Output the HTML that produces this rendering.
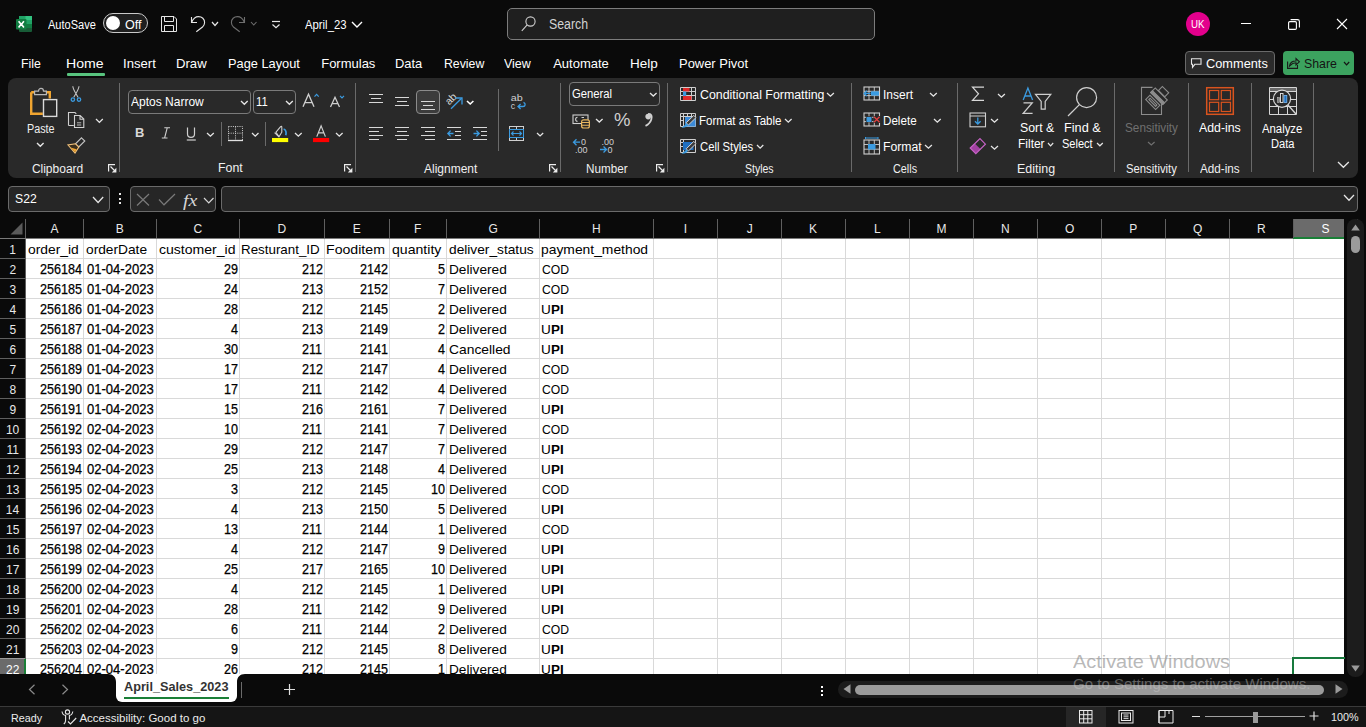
<!DOCTYPE html><html><head><meta charset="utf-8"><style>
html,body{margin:0;padding:0;}
body{width:1366px;height:727px;overflow:hidden;background:#0a0a0a;position:relative;font-family:"Liberation Sans", sans-serif;}
.t{position:absolute;white-space:nowrap;}
.r{position:absolute;box-sizing:border-box;}
.s{position:absolute;overflow:visible;}
</style></head><body>
<svg class="s" style="left:16px;top:16px;" width="17" height="16" viewBox="0 0 17 16">
    <rect x="3" y="0" width="13" height="16" rx="1" fill="#185c37"/>
    <rect x="3" y="0" width="13" height="4" fill="#21a366"/>
    <rect x="9.5" y="0" width="6.5" height="4" fill="#33c481"/>
    <rect x="3" y="4" width="13" height="4" fill="#21a366"/>
    <rect x="3" y="8" width="13" height="4" fill="#107c41"/>
    <rect x="0" y="3" width="10.5" height="10.5" rx="1" fill="#107c41"/>
    <path d="M2.6 5.2 L5 8.3 L2.6 11.4 M7.9 5.2 L5.5 8.3 L7.9 11.4" fill="none" stroke="#fff" stroke-width="1.6"/>
    </svg>
<div class="t" style="left:48.00px;top:19.00px;font-size:12px;line-height:12px;color:#ffffff;transform:scaleX(0.9204);transform-origin:0 0;">AutoSave</div>
<div class="r" style="left:103px;top:13px;width:45px;height:20px;background:#1f1f1f;border:1px solid #c9c9c9;border-radius:10px;"></div>
<div class="r" style="left:106px;top:16px;width:14px;height:14px;background:#ffffff;border-radius:7px;"></div>
<div class="t" style="left:125.18px;top:19.00px;font-size:12px;line-height:12px;color:#ffffff;transform:scaleX(1.0472);transform-origin:0 0;">Off</div>
<svg class="s" style="left:161px;top:16px;" width="16" height="16" viewBox="0 0 16 16"><path d="M0.5 0.5 H13 L15.5 3 V15.5 H0.5 Z" fill="none" stroke="#e6e6e6" stroke-width="1"/>
    <path d="M3.5 0.5 V5.5 H12.5 V0.5 M3.5 15.5 V9.5 H12.5 V15.5" fill="none" stroke="#e6e6e6" stroke-width="1"/></svg>
<svg class="s" style="left:190px;top:16px;" width="16" height="16" viewBox="0 0 16 16"><path d="M1.5 1 V6.5 H7" fill="none" stroke="#e6e6e6" stroke-width="1.1"/>
    <path d="M1.8 6 C3.5 2 6 0.6 8.5 0.6 C12 0.6 14.6 3 14.6 6.5 C14.6 8.5 13.8 9.8 12.5 11 L6.3 15.8" fill="none" stroke="#e6e6e6" stroke-width="1.1"/></svg>
<svg class="s" style="left:210.5px;top:20.5px;" width="8" height="5.5" viewBox="0 0 8 5.5"><path d="M1 1 L4.0 4.5 L7 1" fill="none" stroke="#e6e6e6" stroke-width="1.2"/></svg>
<svg class="s" style="left:230px;top:16px;" width="16" height="16" viewBox="0 0 16 16"><path d="M14.5 1 V6.5 H9" fill="none" stroke="#6e6e6e" stroke-width="1.1"/>
    <path d="M14.2 6 C12.5 2 10 0.6 7.5 0.6 C4 0.6 1.4 3 1.4 6.5 C1.4 8.5 2.2 9.8 3.5 11 L9.7 15.8" fill="none" stroke="#6e6e6e" stroke-width="1.1"/></svg>
<svg class="s" style="left:250px;top:20.5px;" width="7.5" height="5" viewBox="0 0 7.5 5"><path d="M1 1 L3.75 4 L6.5 1" fill="none" stroke="#6e6e6e" stroke-width="1.1"/></svg>
<svg class="s" style="left:271px;top:21px;" width="10" height="8" viewBox="0 0 10 8"><path d="M1 0.5 H9" stroke="#e6e6e6" stroke-width="1.2"/><path d="M1.5 3.5 L5 6.8 L8.5 3.5" fill="none" stroke="#e6e6e6" stroke-width="1.2"/></svg>
<div class="t" style="left:305.00px;top:18.00px;font-size:13px;line-height:13px;color:#ffffff;transform:scaleX(0.8700);transform-origin:0 0;">April_23</div>
<svg class="s" style="left:350.5px;top:21px;" width="12" height="7" viewBox="0 0 12 7"><path d="M1 1 L6.0 6 L11 1" fill="none" stroke="#ffffff" stroke-width="1.4"/></svg>
<div class="r" style="left:507px;top:8px;width:368px;height:32px;background:#1f1f1f;border:1px solid #7c7c7c;border-radius:5px;"></div>
<svg class="s" style="left:521px;top:16px;" width="15" height="16" viewBox="0 0 15 16"><circle cx="9.5" cy="5.5" r="4.6" fill="none" stroke="#cfcfcf" stroke-width="1.1"/><path d="M6.2 8.8 L0.8 14.8" stroke="#cfcfcf" stroke-width="1.1"/></svg>
<div class="t" style="left:549.15px;top:17.00px;font-size:14px;line-height:14px;color:#d2d2d2;transform:scaleX(0.8793);transform-origin:0 0;">Search</div>
<div class="r" style="left:1186px;top:12px;width:24px;height:24px;background:#e3008c;border-radius:12px;"></div>
<div class="t" style="left:1190.76px;top:19.00px;font-size:11.5px;line-height:11.5px;color:#ffffff;transform:scaleX(0.8471);transform-origin:0 0;">UK</div>
<div class="r" style="left:1241px;top:23px;width:10px;height:1px;background:#ffffff;"></div>
<svg class="s" style="left:1288px;top:19px;" width="12" height="11" viewBox="0 0 12 11"><rect x="0.6" y="2.6" width="7.8" height="7.8" rx="1.2" fill="none" stroke="#fff" stroke-width="1.1"/><path d="M2.6 0.6 H9.5 Q11.4 0.6 11.4 2.5 V8.4" fill="none" stroke="#fff" stroke-width="1.1"/></svg>
<svg class="s" style="left:1336px;top:18px;" width="12" height="12" viewBox="0 0 12 12"><path d="M1 1 L11 11 M11 1 L1 11" stroke="#fff" stroke-width="1.1"/></svg>
<div class="t" style="left:21.36px;top:57.00px;font-size:13px;line-height:13px;color:#ffffff;transform:scaleX(0.9445);transform-origin:0 0;">File</div>
<div class="t" style="left:66.42px;top:57.00px;font-size:13px;line-height:13px;color:#ffffff;transform:scaleX(1.0838);transform-origin:0 0;">Home</div>
<div class="t" style="left:123.37px;top:57.00px;font-size:13px;line-height:13px;color:#ffffff;transform:scaleX(1.0080);transform-origin:0 0;">Insert</div>
<div class="t" style="left:176.49px;top:57.00px;font-size:13px;line-height:13px;color:#ffffff;transform:scaleX(1.0111);transform-origin:0 0;">Draw</div>
<div class="t" style="left:228.31px;top:57.00px;font-size:13px;line-height:13px;color:#ffffff;transform:scaleX(0.9850);transform-origin:0 0;">Page Layout</div>
<div class="t" style="left:321.20px;top:57.00px;font-size:13px;line-height:13px;color:#ffffff;">Formulas</div>
<div class="t" style="left:395.31px;top:57.00px;font-size:13px;line-height:13px;color:#ffffff;transform:scaleX(0.9925);transform-origin:0 0;">Data</div>
<div class="t" style="left:443.56px;top:57.00px;font-size:13px;line-height:13px;color:#ffffff;transform:scaleX(0.9441);transform-origin:0 0;">Review</div>
<div class="t" style="left:503.88px;top:57.00px;font-size:13px;line-height:13px;color:#ffffff;transform:scaleX(0.9586);transform-origin:0 0;">View</div>
<div class="t" style="left:553.20px;top:57.00px;font-size:13px;line-height:13px;color:#ffffff;">Automate</div>
<div class="t" style="left:630.26px;top:57.00px;font-size:13px;line-height:13px;color:#ffffff;transform:scaleX(1.0376);transform-origin:0 0;">Help</div>
<div class="t" style="left:679.01px;top:57.00px;font-size:13px;line-height:13px;color:#ffffff;transform:scaleX(0.9949);transform-origin:0 0;">Power Pivot</div>
<div class="r" style="left:67px;top:73px;width:38px;height:2.5px;background:#58c37e;border-radius:1px;"></div>
<div class="r" style="left:1185px;top:51px;width:90px;height:24px;background:#2b2b2b;border:1px solid #6a6a6a;border-radius:4px;"></div>
<svg class="s" style="left:1190px;top:57px;" width="12" height="12" viewBox="0 0 12 12"><path d="M1.5 1.8 H11 V7.3 H4.8 L2.5 10.3 V7.3 H1.5 Z" fill="none" stroke="#e6e6e6" stroke-width="1.1"/></svg>
<div class="t" style="left:1205.99px;top:57.00px;font-size:13px;line-height:13px;color:#ffffff;transform:scaleX(0.9830);transform-origin:0 0;">Comments</div>
<div class="r" style="left:1283px;top:51px;width:71px;height:24px;background:#3ca35f;border-radius:4px;"></div>
<svg class="s" style="left:1287px;top:57px;" width="13" height="12" viewBox="0 0 13 12"><path d="M0.6 4.5 V11.4 H10.5 V8" fill="none" stroke="#1a1a1a" stroke-width="1.1"/><path d="M2.5 9 C3 5.5 6 4 9 4 V1.5 L12.4 4.8 L9 8 V5.8 C6.5 5.8 4.5 7 2.5 9 Z" fill="none" stroke="#1a1a1a" stroke-width="1.1"/></svg>
<div class="t" style="left:1304.01px;top:57.00px;font-size:13px;line-height:13px;color:#141414;transform:scaleX(0.9493);transform-origin:0 0;">Share</div>
<svg class="s" style="left:1343.2px;top:61px;" width="7.2" height="4.9" viewBox="0 0 7.2 4.9"><path d="M1 1 L3.6 3.9 L6.2 1" fill="none" stroke="#141414" stroke-width="1.2"/></svg>
<div class="r" style="left:8px;top:78px;width:1350px;height:99.5px;background:#292929;border-radius:8px;"></div>
<svg class="s" style="left:29px;top:86px;" width="30" height="32" viewBox="0 0 30 32">
<path d="M2.2 6.2 H6 M15 6.2 H20.8 V12.5 M2.2 6.2 V27.8 H13.8" fill="none" stroke="#f0a531" stroke-width="2.4"/>
<path d="M5.6 8.6 V5.2 H9.5 C9.5 1.5 14.5 1.5 14.5 5.2 H17.4 V8.6 Z" fill="#292929" stroke="#b8b8b8" stroke-width="1.2"/>
<rect x="14.5" y="13.6" width="13.2" height="16.8" fill="#292929" stroke="#dadada" stroke-width="1.4"/>
</svg>
<div class="t" style="left:27.00px;top:123.00px;font-size:12px;line-height:12px;color:#f0f0f0;transform:scaleX(0.8996);transform-origin:0 0;">Paste</div>
<svg class="s" style="left:36.2px;top:142px;" width="8.6" height="5.2" viewBox="0 0 8.6 5.2"><path d="M1 1 L4.3 4.2 L7.6 1" fill="none" stroke="#e6e6e6" stroke-width="1.4"/></svg>
<svg class="s" style="left:70px;top:85px;" width="13" height="18" viewBox="0 0 13 18">
<path d="M2.8 1.3 C3.2 5 6 8.5 8 12.2 M9 1.3 C8.6 5 5.8 8.5 3.8 12.2" fill="none" stroke="#c4c4c4" stroke-width="1.1"/>
<circle cx="2.9" cy="14.6" r="1.7" fill="none" stroke="#3b9be0" stroke-width="1.3"/>
<circle cx="9" cy="14.6" r="1.7" fill="none" stroke="#3b9be0" stroke-width="1.3"/>
</svg>
<svg class="s" style="left:67px;top:111px;" width="18" height="18" viewBox="0 0 18 18">
<path d="M1.5 14.5 V1.5 H8 L9.3 2.8 M1.5 14.5 H6.8" fill="none" stroke="#d0d0d0" stroke-width="1.1"/>
<path d="M7.5 16.5 V4.5 H13.2 L16.8 8.1 V16.5 Z M13 4.5 V8.3 H16.8" fill="#292929" stroke="#d0d0d0" stroke-width="1.1"/>
<path d="M10 11.8 H14.2 M10 14 H14.2" stroke="#b8b8b8" stroke-width="1"/>
</svg>
<svg class="s" style="left:95px;top:117.6px;" width="8.8" height="5.4" viewBox="0 0 8.8 5.4"><path d="M1 1 L4.4 4.4 L7.8 1" fill="none" stroke="#e6e6e6" stroke-width="1.3"/></svg>
<svg class="s" style="left:67px;top:137px;" width="19" height="17" viewBox="0 0 19 17">
<path d="M14.5 0.8 L17.8 4 L11.8 10 L8.5 6.8 Z" fill="#292929" stroke="#c4c4c4" stroke-width="1.1"/>
<path d="M8.5 6.8 L11.8 10 L8 16 L1 8 Z" fill="#3a2e1c" stroke="#f3c27a" stroke-width="1.1"/>
<path d="M3.5 10.5 L8 15.2 L9.6 12.2 Z" fill="#f0a531"/>
</svg>
<div class="t" style="left:31.88px;top:163.00px;font-size:12px;line-height:12px;color:#f0f0f0;">Clipboard</div>
<svg class="s" style="left:108px;top:163.5px;" width="9" height="9" viewBox="0 0 9 9"><path d="M0.6 7.5 V0.6 H7" fill="none" stroke="#ececec" stroke-width="1.2"/><path d="M2.5 2.5 L7.6 7.6" stroke="#ececec" stroke-width="1.3"/><path d="M8.4 3.8 V8.4 H3.8 Z" fill="#ececec"/></svg>
<div class="r" style="left:119px;top:83px;width:1px;height:89px;background:#6a6a6a;"></div>
<div class="r" style="left:128px;top:90px;width:123px;height:24px;background:none;border:1px solid #7a7a7a;border-radius:4px;"></div>
<div class="t" style="left:131.20px;top:95.00px;font-size:13px;line-height:13px;color:#ffffff;transform:scaleX(0.9244);transform-origin:0 0;">Aptos Narrow</div>
<svg class="s" style="left:240px;top:99.8px;" width="8.7" height="5.3" viewBox="0 0 8.7 5.3"><path d="M1 1 L4.35 4.3 L7.7 1" fill="none" stroke="#e6e6e6" stroke-width="1.3"/></svg>
<div class="r" style="left:253px;top:90px;width:43px;height:24px;background:none;border:1px solid #7a7a7a;border-radius:4px;"></div>
<div class="t" style="left:255.83px;top:95.00px;font-size:13px;line-height:13px;color:#ffffff;transform:scaleX(0.8674);transform-origin:0 0;">11</div>
<svg class="s" style="left:285px;top:99.8px;" width="8.8" height="5.3" viewBox="0 0 8.8 5.3"><path d="M1 1 L4.4 4.3 L7.8 1" fill="none" stroke="#e6e6e6" stroke-width="1.3"/></svg>
<svg class="s" style="left:302px;top:92px;" width="18" height="16" viewBox="0 0 18 16"><path d="M1 14.8 L6.5 2.2 L12 14.8 M3 10.6 H10" fill="none" stroke="#cfcfcf" stroke-width="1.3"/>
<path d="M12.5 4.6 L14.6 2.4 L16.7 4.6" fill="none" stroke="#3b9be0" stroke-width="1.2"/></svg>
<svg class="s" style="left:329px;top:95px;" width="16" height="13" viewBox="0 0 16 13"><path d="M1.5 12 L6 2.3 L10.5 12 M3.2 8.6 H8.8" fill="none" stroke="#cfcfcf" stroke-width="1.3"/>
<path d="M11 0.8 L13 2.8 L15 0.8" fill="none" stroke="#3b9be0" stroke-width="1.2"/></svg>
<div class="t" style="left:135.46px;top:126.00px;font-size:13.5px;line-height:13.5px;color:#d8d8d8;font-weight:700;transform:scaleX(0.9576);transform-origin:0 0;">B</div>
<svg class="s" style="left:161px;top:127px;" width="10" height="12" viewBox="0 0 10 12"><path d="M3.3 0.8 H9 M0.8 11 H6.5 M6.2 0.8 L3.6 11" fill="none" stroke="#cfcfcf" stroke-width="1.1"/></svg>
<svg class="s" style="left:186px;top:127px;" width="11" height="14" viewBox="0 0 11 14"><path d="M1.5 0.5 V7 C1.5 11.5 8.5 11.5 8.5 7 V0.5" fill="none" stroke="#cfcfcf" stroke-width="1.2"/><path d="M0.8 13 H9.8" stroke="#cfcfcf" stroke-width="1.2"/></svg>
<svg class="s" style="left:206px;top:132px;" width="8.8" height="5.2" viewBox="0 0 8.8 5.2"><path d="M1 1 L4.4 4.2 L7.8 1" fill="none" stroke="#e6e6e6" stroke-width="1.3"/></svg>
<div class="r" style="left:221px;top:122px;width:1px;height:24px;background:#6a6a6a;"></div>
<svg class="s" style="left:227px;top:125px;" width="18" height="17" viewBox="0 0 18 17"><path d="M1.5 1.5 H15.5 V15 M1.5 1.5 V15 M8.5 1.5 V15 M1.5 8.2 H15.5" fill="none" stroke="#cfcfcf" stroke-width="1" stroke-dasharray="1 1.2"/>
<path d="M1 15.5 H16" stroke="#e0e0e0" stroke-width="1.3"/></svg>
<svg class="s" style="left:250.5px;top:132px;" width="8.5" height="5.2" viewBox="0 0 8.5 5.2"><path d="M1 1 L4.25 4.2 L7.5 1" fill="none" stroke="#e6e6e6" stroke-width="1.3"/></svg>
<div class="r" style="left:265px;top:122px;width:1px;height:24px;background:#6a6a6a;"></div>
<svg class="s" style="left:271px;top:124px;" width="18" height="19" viewBox="0 0 18 19"><path d="M5 8.2 L9.6 2.6 Q10.8 1.6 10.8 3.2 V8.2 L8 12.8 Z M5 8.2 L8 12.8" fill="none" stroke="#d0d0d0" stroke-width="1.1"/>
<path d="M3.6 8.6 L8 12.9" stroke="#d0d0d0" stroke-width="1.1"/>
<path d="M12.6 5 C14.8 5.6 15.6 8.5 14.8 11.2" fill="none" stroke="#3b9be0" stroke-width="1.7"/>
<rect x="1" y="14" width="16.2" height="4.1" fill="#ffff00"/></svg>
<svg class="s" style="left:294px;top:132px;" width="8.7" height="5.2" viewBox="0 0 8.7 5.2"><path d="M1 1 L4.35 4.2 L7.7 1" fill="none" stroke="#e6e6e6" stroke-width="1.3"/></svg>
<svg class="s" style="left:312px;top:124px;" width="18" height="19" viewBox="0 0 18 19"><path d="M4.8 12.6 L9.1 1.9 L13.4 12.6 M6.4 8.8 H11.8" fill="none" stroke="#d0d0d0" stroke-width="1.2"/>
<rect x="1" y="14" width="16.2" height="4.1" fill="#ff0000"/></svg>
<svg class="s" style="left:335.4px;top:132px;" width="8.6" height="5.2" viewBox="0 0 8.6 5.2"><path d="M1 1 L4.3 4.2 L7.6 1" fill="none" stroke="#e6e6e6" stroke-width="1.3"/></svg>
<div class="t" style="left:217.57px;top:162.00px;font-size:12px;line-height:12px;color:#f0f0f0;transform:scaleX(1.0317);transform-origin:0 0;">Font</div>
<svg class="s" style="left:344px;top:164px;" width="9" height="9" viewBox="0 0 9 9"><path d="M0.6 7.5 V0.6 H7" fill="none" stroke="#ececec" stroke-width="1.2"/><path d="M2.5 2.5 L7.6 7.6" stroke="#ececec" stroke-width="1.3"/><path d="M8.4 3.8 V8.4 H3.8 Z" fill="#ececec"/></svg>
<div class="r" style="left:355px;top:83px;width:1px;height:89px;background:#6a6a6a;"></div>
<div class="r" style="left:369.0px;top:94px;width:14px;height:1px;background:#d8d8d8;"></div>
<div class="r" style="left:371.0px;top:98px;width:10px;height:1px;background:#d8d8d8;"></div>
<div class="r" style="left:369.0px;top:102px;width:14px;height:1px;background:#d8d8d8;"></div>
<div class="r" style="left:395.0px;top:97px;width:14px;height:1px;background:#d8d8d8;"></div>
<div class="r" style="left:397.0px;top:101px;width:10px;height:1px;background:#d8d8d8;"></div>
<div class="r" style="left:395.0px;top:105px;width:14px;height:1px;background:#d8d8d8;"></div>
<div class="r" style="left:416px;top:90px;width:24px;height:24px;background:#3c3c3c;border:1px solid #8c8c8c;border-radius:4px;"></div>
<div class="r" style="left:421.0px;top:101px;width:14px;height:1px;background:#d8d8d8;"></div>
<div class="r" style="left:423.0px;top:105px;width:10px;height:1px;background:#d8d8d8;"></div>
<div class="r" style="left:421.0px;top:109px;width:14px;height:1px;background:#d8d8d8;"></div>
<svg class="s" style="left:444px;top:91px;" width="20" height="20" viewBox="0 0 20 20"><text x="0" y="0" transform="translate(5.2 14.6) rotate(-45)" font-family="Liberation Sans" font-size="10.5" fill="#d8d8d8">ab</text>
<path d="M7 17.8 L17.6 7.2" stroke="#3b9be0" stroke-width="1.3"/><path d="M11.5 7 H18 V13.5" fill="none" stroke="#3b9be0" stroke-width="1.3"/></svg>
<svg class="s" style="left:466.3px;top:100px;" width="8.4" height="5" viewBox="0 0 8.4 5"><path d="M1 1 L4.2 4 L7.4 1" fill="none" stroke="#ffffff" stroke-width="1.6"/></svg>
<div class="r" style="left:369px;top:127px;width:14px;height:1px;background:#d8d8d8;"></div>
<div class="r" style="left:369px;top:131px;width:10px;height:1px;background:#d8d8d8;"></div>
<div class="r" style="left:369px;top:135px;width:14px;height:1px;background:#d8d8d8;"></div>
<div class="r" style="left:369px;top:139px;width:10px;height:1px;background:#d8d8d8;"></div>
<div class="r" style="left:395.0px;top:127px;width:14px;height:1px;background:#d8d8d8;"></div>
<div class="r" style="left:397.0px;top:131px;width:10px;height:1px;background:#d8d8d8;"></div>
<div class="r" style="left:395.0px;top:135px;width:14px;height:1px;background:#d8d8d8;"></div>
<div class="r" style="left:397.0px;top:139px;width:10px;height:1px;background:#d8d8d8;"></div>
<div class="r" style="left:421px;top:127px;width:14px;height:1px;background:#d8d8d8;"></div>
<div class="r" style="left:425px;top:131px;width:10px;height:1px;background:#d8d8d8;"></div>
<div class="r" style="left:421px;top:135px;width:14px;height:1px;background:#d8d8d8;"></div>
<div class="r" style="left:425px;top:139px;width:10px;height:1px;background:#d8d8d8;"></div>
<div class="r" style="left:447px;top:127px;width:14px;height:1px;background:#d8d8d8;"></div>
<div class="r" style="left:455px;top:131px;width:6px;height:1px;background:#d8d8d8;"></div>
<div class="r" style="left:455px;top:135px;width:6px;height:1px;background:#d8d8d8;"></div>
<div class="r" style="left:447px;top:139px;width:14px;height:1px;background:#d8d8d8;"></div>
<svg class="s" style="left:447px;top:129px;" width="8" height="9" viewBox="0 0 8 9"><path d="M0.8 4.5 H6.5 M3.6 1.6 L0.8 4.5 L3.6 7.4" fill="none" stroke="#3b9be0" stroke-width="1.3"/></svg>
<div class="r" style="left:473px;top:127px;width:14px;height:1px;background:#d8d8d8;"></div>
<div class="r" style="left:481px;top:131px;width:6px;height:1px;background:#d8d8d8;"></div>
<div class="r" style="left:481px;top:135px;width:6px;height:1px;background:#d8d8d8;"></div>
<div class="r" style="left:473px;top:139px;width:14px;height:1px;background:#d8d8d8;"></div>
<svg class="s" style="left:473px;top:129px;" width="8" height="9" viewBox="0 0 8 9"><path d="M0.5 4.5 H6.2 M3.4 1.6 L6.2 4.5 L3.4 7.4" fill="none" stroke="#3b9be0" stroke-width="1.3"/></svg>
<div class="r" style="left:498px;top:89px;width:1px;height:62px;background:#6a6a6a;"></div>
<svg class="s" style="left:510px;top:93px;" width="17" height="18" viewBox="0 0 17 18"><text x="0.8" y="8.4" font-family="Liberation Sans" font-size="8.8" fill="#cfcfcf" textLength="12" lengthAdjust="spacingAndGlyphs">ab</text>
<text x="0.8" y="16" font-family="Liberation Sans" font-size="8.8" fill="#cfcfcf">c</text>
<path d="M13.5 9.4 C16 10.5 15.5 13.5 13 13.5 H8.2 M10.6 11 L8 13.5 L10.6 16" fill="none" stroke="#3b9be0" stroke-width="1.3"/></svg>
<svg class="s" style="left:508px;top:125px;" width="17" height="17" viewBox="0 0 17 17"><rect x="1.5" y="1.5" width="14" height="14" fill="none" stroke="#cfcfcf" stroke-width="1"/>
<path d="M8.5 1.5 V4.5 M8.5 12.5 V15.5" stroke="#cfcfcf" stroke-width="1"/>
<rect x="1.5" y="4.5" width="14" height="8" fill="#292929" stroke="#3b9be0" stroke-width="1"/>
<path d="M3.5 8.5 H13.5 M5.5 6.5 L3.5 8.5 L5.5 10.5 M11.5 6.5 L13.5 8.5 L11.5 10.5" fill="none" stroke="#3b9be0" stroke-width="1.1"/></svg>
<svg class="s" style="left:536.4px;top:132.2px;" width="8.2" height="4.9" viewBox="0 0 8.2 4.9"><path d="M1 1 L4.1 3.9 L7.2 1" fill="none" stroke="#e6e6e6" stroke-width="1.3"/></svg>
<div class="t" style="left:424.00px;top:163.00px;font-size:12px;line-height:12px;color:#f0f0f0;">Alignment</div>
<svg class="s" style="left:549px;top:164px;" width="9" height="9" viewBox="0 0 9 9"><path d="M0.6 7.5 V0.6 H7" fill="none" stroke="#ececec" stroke-width="1.2"/><path d="M2.5 2.5 L7.6 7.6" stroke="#ececec" stroke-width="1.3"/><path d="M8.4 3.8 V8.4 H3.8 Z" fill="#ececec"/></svg>
<div class="r" style="left:560px;top:83px;width:1px;height:89px;background:#6a6a6a;"></div>
<div class="r" style="left:569px;top:82px;width:91px;height:24px;background:none;border:1px solid #7a7a7a;border-radius:4px;"></div>
<div class="t" style="left:572.14px;top:88.00px;font-size:12.5px;line-height:12.5px;color:#ffffff;transform:scaleX(0.9020);transform-origin:0 0;">General</div>
<svg class="s" style="left:649px;top:91.6px;" width="8.6" height="5.1" viewBox="0 0 8.6 5.1"><path d="M1 1 L4.3 4.1 L7.6 1" fill="none" stroke="#e6e6e6" stroke-width="1.3"/></svg>
<svg class="s" style="left:572px;top:114px;" width="19" height="15" viewBox="0 0 19 15"><rect x="1" y="1" width="15" height="8.5" fill="none" stroke="#cfcfcf" stroke-width="1.1"/>
<path d="M5.5 3.2 C3 3.2 3 7.4 5.5 7.4 M9.5 3.5 H12" fill="none" stroke="#cfcfcf" stroke-width="1.1"/>
<rect x="9.6" y="5.8" width="7.8" height="8.2" rx="2" fill="#292929" stroke="#e8b75f" stroke-width="1.2"/>
<path d="M9.6 8.5 H17.4 M9.6 11.2 H17.4" stroke="#e8b75f" stroke-width="1.1"/></svg>
<svg class="s" style="left:595px;top:118px;" width="8.6" height="5.1" viewBox="0 0 8.6 5.1"><path d="M1 1 L4.3 4.1 L7.6 1" fill="none" stroke="#e6e6e6" stroke-width="1.3"/></svg>
<div class="t" style="left:613.66px;top:111.00px;font-size:18px;line-height:18px;color:#d0d0d0;transform:scaleX(1.0305);transform-origin:0 0;">%</div>
<svg class="s" style="left:643px;top:113px;" width="11" height="14" viewBox="0 0 11 14"><path d="M5.2 1 C8.5 0.5 9.3 3.5 8.3 6.5 C7.5 9 5.5 11.5 2.5 12.8" fill="none" stroke="#d0d0d0" stroke-width="1.8"/><circle cx="5.2" cy="3.6" r="2.8" fill="#d0d0d0"/></svg>
<svg class="s" style="left:572px;top:137px;" width="18" height="17" viewBox="0 0 18 17"><path d="M1.5 5.2 H8 M4.5 2.2 L1.5 5.2 L4.5 8.2" fill="none" stroke="#3b9be0" stroke-width="1.3"/>
<text x="9" y="8.2" font-family="Liberation Sans" font-size="9" fill="#d0d0d0">0</text>
<text x="3" y="16" font-family="Liberation Sans" font-size="9" fill="#d0d0d0">.00</text></svg>
<svg class="s" style="left:598px;top:137px;" width="18" height="17" viewBox="0 0 18 17"><path d="M2 12.5 H8.5 M5.5 9.5 L8.5 12.5 L5.5 15.5" fill="none" stroke="#3b9be0" stroke-width="1.3"/>
<text x="3.5" y="8.2" font-family="Liberation Sans" font-size="9" fill="#d0d0d0">.00</text>
<text x="9.5" y="16" font-family="Liberation Sans" font-size="9" fill="#d0d0d0">0</text></svg>
<div class="t" style="left:585.83px;top:163.00px;font-size:12px;line-height:12px;color:#f0f0f0;transform:scaleX(0.9740);transform-origin:0 0;">Number</div>
<svg class="s" style="left:656px;top:164px;" width="9" height="9" viewBox="0 0 9 9"><path d="M0.6 7.5 V0.6 H7" fill="none" stroke="#ececec" stroke-width="1.2"/><path d="M2.5 2.5 L7.6 7.6" stroke="#ececec" stroke-width="1.3"/><path d="M8.4 3.8 V8.4 H3.8 Z" fill="#ececec"/></svg>
<div class="r" style="left:667px;top:83px;width:1px;height:89px;background:#6a6a6a;"></div>
<svg class="s" style="left:680px;top:87px;" width="17" height="15" viewBox="0 0 17 15"><path d="M0.5 0.5 H15.5 V13.5 H0.5 Z M3.5 0.5 V13.5 M11.5 0.5 V13.5 M0.5 4.5 H15.5 M0.5 8.5 H15.5" fill="none" stroke="#cfcfcf" stroke-width="1"/>
<rect x="3" y="1" width="6.5" height="3.5" fill="#e02a2a"/><rect x="3" y="4.5" width="3.2" height="4.5" fill="#3b9be0"/><rect x="3" y="9" width="8.5" height="4" fill="#e02a2a"/></svg>
<div class="t" style="left:699.78px;top:89.00px;font-size:12.5px;line-height:12.5px;color:#ffffff;transform:scaleX(0.9899);transform-origin:0 0;">Conditional Formatting</div>
<svg class="s" style="left:826.2px;top:92.2px;" width="8.9" height="5.2" viewBox="0 0 8.9 5.2"><path d="M1 1 L4.45 4.2 L7.9 1" fill="none" stroke="#e6e6e6" stroke-width="1.3"/></svg>
<svg class="s" style="left:680px;top:113px;" width="17" height="16" viewBox="0 0 17 16"><path d="M0.5 0.5 H15.5 V13.5 H0.5 Z M3.5 0.5 V13.5 M7.5 0.5 V4 M11.5 0.5 V4 M0.5 3.5 H15.5 M0.5 7.5 H4" fill="none" stroke="#cfcfcf" stroke-width="1"/>
<rect x="5" y="4" width="10.5" height="9.5" fill="#3b8ad8"/>
<path d="M16 4.6 L8.4 12 L6.2 9.8 L13.8 2.4 Z" fill="#3a3a3a" stroke="#d0d0d0" stroke-width="1"/>
<path d="M6.5 10.4 L8 11.8 C7 14 5 15 1.5 14.8 C3.5 13.5 4.5 11.5 6.5 10.4 Z" fill="#3b9be0"/></svg>
<div class="t" style="left:699.48px;top:115.00px;font-size:12.5px;line-height:12.5px;color:#ffffff;transform:scaleX(0.9231);transform-origin:0 0;">Format as Table</div>
<svg class="s" style="left:784.4px;top:118.3px;" width="8.6" height="5.2" viewBox="0 0 8.6 5.2"><path d="M1 1 L4.3 4.2 L7.6 1" fill="none" stroke="#e6e6e6" stroke-width="1.3"/></svg>
<svg class="s" style="left:680px;top:139px;" width="17" height="16" viewBox="0 0 17 16"><path d="M0.5 0.5 H15.5 V13.5 H0.5 Z M3.5 0.5 V13.5 M0.5 3.5 H15.5 M0.5 7.5 H3.5" fill="none" stroke="#cfcfcf" stroke-width="1"/>
<rect x="3" y="3" width="10.5" height="8" fill="#1f6fc0"/>
<path d="M16 4.6 L8.4 12 L6.2 9.8 L13.8 2.4 Z" fill="#3a3a3a" stroke="#d0d0d0" stroke-width="1"/>
<path d="M6.5 10.4 L8 11.8 C7 14 5 15 1.5 14.8 C3.5 13.5 4.5 11.5 6.5 10.4 Z" fill="#3b9be0"/></svg>
<div class="t" style="left:699.84px;top:141.00px;font-size:12.5px;line-height:12.5px;color:#ffffff;transform:scaleX(0.9019);transform-origin:0 0;">Cell Styles</div>
<svg class="s" style="left:755.5px;top:144.2px;" width="8.3" height="5.1" viewBox="0 0 8.3 5.1"><path d="M1 1 L4.15 4.1 L7.3 1" fill="none" stroke="#e6e6e6" stroke-width="1.3"/></svg>
<div class="t" style="left:745.06px;top:163.00px;font-size:12px;line-height:12px;color:#f0f0f0;transform:scaleX(0.8756);transform-origin:0 0;">Styles</div>
<div class="r" style="left:851px;top:83px;width:1px;height:89px;background:#6a6a6a;"></div>
<svg class="s" style="left:863px;top:86px;" width="18" height="16" viewBox="0 0 18 16"><rect x="1" y="1" width="15.5" height="13" fill="none" stroke="#cfcfcf" stroke-width="1.1"/>
<path d="M1 5.3 H16.5 M1 9.6 H16.5 M6 1 V14 M11.3 1 V14" stroke="#cfcfcf" stroke-width="0.9"/><rect x="8" y="5.3" width="8" height="4.3" fill="#3b9be0"/><path d="M1.2 7.4 H7.5 M3.8 4.8 L1.2 7.4 L3.8 10" fill="none" stroke="#3b9be0" stroke-width="1.3"/></svg>
<div class="t" style="left:883.12px;top:89.00px;font-size:12.5px;line-height:12.5px;color:#ffffff;transform:scaleX(0.9600);transform-origin:0 0;">Insert</div>
<svg class="s" style="left:929.2px;top:92.3px;" width="8.8" height="5.2" viewBox="0 0 8.8 5.2"><path d="M1 1 L4.4 4.2 L7.8 1" fill="none" stroke="#e6e6e6" stroke-width="1.3"/></svg>
<svg class="s" style="left:863px;top:112px;" width="18" height="16" viewBox="0 0 18 16"><rect x="1" y="1" width="15.5" height="13" fill="none" stroke="#cfcfcf" stroke-width="1.1"/>
<path d="M1 5.3 H16.5 M1 9.6 H16.5 M6 1 V14 M11.3 1 V14" stroke="#cfcfcf" stroke-width="0.9"/><rect x="3" y="4.3" width="6" height="6" fill="#292929"/><rect x="3.5" y="5" width="5" height="5" fill="#3b9be0"/><rect x="10.5" y="4" width="7" height="7" fill="#292929"/><path d="M11 4.8 L16.5 10.3 M16.5 4.8 L11 10.3" stroke="#e04040" stroke-width="1.3"/></svg>
<div class="t" style="left:883.27px;top:115.00px;font-size:12.5px;line-height:12.5px;color:#ffffff;transform:scaleX(0.9304);transform-origin:0 0;">Delete</div>
<svg class="s" style="left:933.3px;top:118.3px;" width="8.7" height="5.2" viewBox="0 0 8.7 5.2"><path d="M1 1 L4.35 4.2 L7.7 1" fill="none" stroke="#e6e6e6" stroke-width="1.3"/></svg>
<svg class="s" style="left:863px;top:137px;" width="18" height="18" viewBox="0 0 18 18"><rect x="1" y="3" width="15.5" height="14" fill="none" stroke="#cfcfcf" stroke-width="1.1"/>
<path d="M1 7.5 H16.5 M1 12.2 H16.5 M6 3 V17 M11.3 3 V17" stroke="#cfcfcf" stroke-width="0.9"/>
<rect x="5" y="7" width="7.5" height="5.5" fill="#3b9be0"/>
<path d="M2.5 1 H15 M2.5 0 V2 M15 0 V2" stroke="#3b9be0" stroke-width="1"/></svg>
<div class="t" style="left:883.22px;top:141.00px;font-size:12.5px;line-height:12.5px;color:#ffffff;transform:scaleX(0.9792);transform-origin:0 0;">Format</div>
<svg class="s" style="left:924.2px;top:144.2px;" width="8.9" height="5.2" viewBox="0 0 8.9 5.2"><path d="M1 1 L4.45 4.2 L7.9 1" fill="none" stroke="#e6e6e6" stroke-width="1.3"/></svg>
<div class="t" style="left:893.04px;top:163.00px;font-size:12px;line-height:12px;color:#f0f0f0;transform:scaleX(0.9015);transform-origin:0 0;">Cells</div>
<div class="r" style="left:957px;top:83px;width:1px;height:89px;background:#6a6a6a;"></div>
<svg class="s" style="left:971px;top:86px;" width="15" height="16" viewBox="0 0 15 16"><path d="M13 1.2 H1.5 L7.5 7.8 L1.5 14.4 H13" fill="none" stroke="#d8d8d8" stroke-width="1.2"/></svg>
<svg class="s" style="left:997px;top:92.5px;" width="8.9" height="5.2" viewBox="0 0 8.9 5.2"><path d="M1 1 L4.45 4.2 L7.9 1" fill="none" stroke="#e6e6e6" stroke-width="1.3"/></svg>
<svg class="s" style="left:969px;top:112px;" width="18" height="16" viewBox="0 0 18 16"><rect x="1" y="1" width="15.5" height="13.8" fill="none" stroke="#cfcfcf" stroke-width="1.1"/><path d="M1 4 H16.5" stroke="#cfcfcf" stroke-width="1"/><path d="M8.8 5.5 V12 M6 9.3 L8.8 12 L11.6 9.3" fill="none" stroke="#3b9be0" stroke-width="1.3"/></svg>
<svg class="s" style="left:990px;top:118.3px;" width="9" height="5.2" viewBox="0 0 9 5.2"><path d="M1 1 L4.5 4.2 L8 1" fill="none" stroke="#e6e6e6" stroke-width="1.3"/></svg>
<svg class="s" style="left:969px;top:137px;" width="18" height="18" viewBox="0 0 18 18"><path d="M1.2 11 L5.8 6.4 L11.4 12 L6.8 16.6 Z" fill="#a341a3"/>
<path d="M11 1.6 L16.4 7.2 L6.8 16.6 L1.2 11 Z" fill="none" stroke="#c763c7" stroke-width="1.2"/></svg>
<svg class="s" style="left:990px;top:144.5px;" width="9" height="5.2" viewBox="0 0 9 5.2"><path d="M1 1 L4.5 4.2 L8 1" fill="none" stroke="#e6e6e6" stroke-width="1.3"/></svg>
<svg class="s" style="left:1021px;top:87px;" width="32" height="28" viewBox="0 0 32 28"><path d="M2.2 13 L6.9 1 L11.6 13 M3.8 9 H10" fill="none" stroke="#3b9be0" stroke-width="1.3"/>
<path d="M2.5 15.8 H11.2 L2.2 26.3 H11.6" fill="none" stroke="#cfcfcf" stroke-width="1.3"/>
<path d="M14.5 7.4 H29.8 L24.2 14.4 V22.2 H20.2 V14.4 Z" fill="none" stroke="#cfcfcf" stroke-width="1.2"/></svg>
<div class="t" style="left:1019.88px;top:122.00px;font-size:12.5px;line-height:12.5px;color:#ffffff;transform:scaleX(0.9860);transform-origin:0 0;">Sort &amp;</div>
<div class="t" style="left:1017.54px;top:138.00px;font-size:12.5px;line-height:12.5px;color:#ffffff;transform:scaleX(0.9577);transform-origin:0 0;">Filter</div>
<svg class="s" style="left:1047.4px;top:141.8px;" width="7.2" height="4.8" viewBox="0 0 7.2 4.8"><path d="M1 1 L3.6 3.8 L6.2 1" fill="none" stroke="#e6e6e6" stroke-width="1.2"/></svg>
<svg class="s" style="left:1066px;top:86px;" width="33" height="31" viewBox="0 0 33 31"><circle cx="20.6" cy="11.6" r="10" fill="none" stroke="#cfcfcf" stroke-width="1.2"/><path d="M13.4 18.6 L2 30" stroke="#cfcfcf" stroke-width="1.3"/></svg>
<div class="t" style="left:1064.28px;top:122.00px;font-size:12.5px;line-height:12.5px;color:#ffffff;transform:scaleX(1.0179);transform-origin:0 0;">Find &amp;</div>
<div class="t" style="left:1062.15px;top:138.00px;font-size:12.5px;line-height:12.5px;color:#ffffff;transform:scaleX(0.8824);transform-origin:0 0;">Select</div>
<svg class="s" style="left:1095.7px;top:141.8px;" width="7.8" height="4.8" viewBox="0 0 7.8 4.8"><path d="M1 1 L3.9 3.8 L6.8 1" fill="none" stroke="#e6e6e6" stroke-width="1.2"/></svg>
<div class="t" style="left:1017.46px;top:163.00px;font-size:12px;line-height:12px;color:#f0f0f0;transform:scaleX(1.0380);transform-origin:0 0;">Editing</div>
<div class="r" style="left:1114px;top:83px;width:1px;height:89px;background:#6a6a6a;"></div>
<svg class="s" style="left:1140px;top:84px;" width="30" height="32" viewBox="0 0 30 32"><path d="M12.5 3.4 H1.5 V30.5 H21.5 V17.8" fill="none" stroke="#8c8c8c" stroke-width="1.1"/>
<g transform="translate(12.8 18.4) rotate(-45) translate(-3 0)" fill="none" stroke="#8c8c8c" stroke-width="1.1">
<rect x="0" y="-7" width="6" height="14" fill="#292929"/><rect x="2.2" y="-4.8" width="1.8" height="9.6"/>
<rect x="8.5" y="-8.5" width="6.5" height="17" fill="#292929"/><rect x="8.5" y="-8.5" width="2.6" height="17" fill="#8c8c8c"/>
<rect x="15.5" y="-4.5" width="5.5" height="9" fill="#292929"/></g></svg>
<div class="t" style="left:1125.11px;top:122.00px;font-size:12.5px;line-height:12.5px;color:#707070;transform:scaleX(0.9402);transform-origin:0 0;">Sensitivity</div>
<svg class="s" style="left:1147.4px;top:141.2px;" width="8.6" height="4.9" viewBox="0 0 8.6 4.9"><path d="M1 1 L4.3 3.9 L7.6 1" fill="none" stroke="#707070" stroke-width="1.2"/></svg>
<div class="t" style="left:1126.33px;top:163.00px;font-size:12px;line-height:12px;color:#f0f0f0;transform:scaleX(0.9421);transform-origin:0 0;">Sensitivity</div>
<div class="r" style="left:1188px;top:83px;width:1px;height:89px;background:#6a6a6a;"></div>
<svg class="s" style="left:1205px;top:86px;" width="30" height="30" viewBox="0 0 30 30"><rect x="1.7" y="1.7" width="26.6" height="26.6" fill="none" stroke="#d9531e" stroke-width="1.5"/>
<rect x="4.5" y="4.5" width="9.2" height="9.2" fill="none" stroke="#d9531e" stroke-width="1.2"/>
<rect x="16.3" y="4.5" width="9.2" height="9.2" fill="none" stroke="#d9531e" stroke-width="1.2"/>
<rect x="4.5" y="16.3" width="9.2" height="9.2" fill="none" stroke="#d9531e" stroke-width="1.2"/>
<rect x="16.3" y="16.3" width="9.2" height="9.2" fill="none" stroke="#d9531e" stroke-width="1.2"/></svg>
<div class="t" style="left:1199.00px;top:122.00px;font-size:12.5px;line-height:12.5px;color:#ffffff;transform:scaleX(0.9839);transform-origin:0 0;">Add-ins</div>
<div class="t" style="left:1200.00px;top:163.00px;font-size:12px;line-height:12px;color:#f0f0f0;transform:scaleX(0.9759);transform-origin:0 0;">Add-ins</div>
<div class="r" style="left:1251px;top:83px;width:1px;height:89px;background:#6a6a6a;"></div>
<svg class="s" style="left:1268px;top:86px;" width="30" height="30" viewBox="0 0 30 30"><rect x="1.5" y="2" width="27" height="3" fill="#6a6a6a"/>
<path d="M1.5 1.5 H28.5 V28.5 H1.5 Z M1.5 5.5 H28.5 M1.5 13.5 H28.5 M1.5 20.5 H28.5 M10.5 20.5 V28.5 M19.5 20.5 V28.5" fill="none" stroke="#d6d6d6" stroke-width="1"/>
<circle cx="14" cy="12.7" r="8.6" fill="#292929" stroke="#d8d8d8" stroke-width="1.2"/>
<path d="M20.2 19.2 L28.2 28.2" stroke="#d8d8d8" stroke-width="1.3"/>
<rect x="9.5" y="11.5" width="2" height="5" fill="#7a7a7a" stroke="#bdbdbd" stroke-width="0.6"/>
<rect x="12.5" y="7.5" width="2.5" height="9" fill="#1a1a1a" stroke="#e6e6e6" stroke-width="0.9"/>
<rect x="16" y="9.5" width="2.8" height="7" fill="#1f6fc0" stroke="#7ab8f0" stroke-width="0.8"/></svg>
<div class="t" style="left:1262.30px;top:123.00px;font-size:12.5px;line-height:12.5px;color:#ffffff;transform:scaleX(0.9071);transform-origin:0 0;">Analyze</div>
<div class="t" style="left:1270.61px;top:138.00px;font-size:12.5px;line-height:12.5px;color:#ffffff;transform:scaleX(0.8902);transform-origin:0 0;">Data</div>
<div class="r" style="left:1313px;top:83px;width:1px;height:89px;background:#6a6a6a;"></div>
<svg class="s" style="left:1337.2px;top:160.8px;" width="12.8" height="7.3" viewBox="0 0 12.8 7.3"><path d="M1 1 L6.4 6.3 L11.8 1" fill="none" stroke="#e6e6e6" stroke-width="1.3"/></svg>
<div class="r" style="left:8px;top:186px;width:102px;height:26px;background:#262626;border:1px solid #6a6a6a;border-radius:4px;"></div>
<div class="t" style="left:14.91px;top:192.00px;font-size:13px;line-height:13px;color:#ffffff;transform:scaleX(0.9371);transform-origin:0 0;">S22</div>
<svg class="s" style="left:92.3px;top:196.3px;" width="12.2" height="7.5" viewBox="0 0 12.2 7.5"><path d="M1 1 L6.1 6.5 L11.2 1" fill="none" stroke="#e6e6e6" stroke-width="1.3"/></svg>
<div class="r" style="left:119px;top:193px;width:2px;height:2px;background:#e6e6e6;"></div>
<div class="r" style="left:119px;top:197.5px;width:2px;height:2px;background:#e6e6e6;"></div>
<div class="r" style="left:119px;top:202px;width:2px;height:2px;background:#e6e6e6;"></div>
<div class="r" style="left:130px;top:186px;width:86px;height:26px;background:#262626;border:1px solid #6a6a6a;border-radius:4px;"></div>
<svg class="s" style="left:136px;top:193px;" width="14" height="13" viewBox="0 0 14 13"><path d="M1 1 L13 12.5 M13 1 L1 12.5" stroke="#7a7a7a" stroke-width="1.2"/></svg>
<svg class="s" style="left:158px;top:193px;" width="18" height="13" viewBox="0 0 18 13"><path d="M1 6.5 L6 11.8 L17 1" fill="none" stroke="#7a7a7a" stroke-width="1.2"/></svg>
<div class="t" style="left:183.39px;top:193.00px;font-size:16px;line-height:16px;color:#d6d6d6;transform:scaleX(1.2417);transform-origin:0 0;font-family:'Liberation Serif',serif;font-style:italic;">fx</div>
<svg class="s" style="left:203px;top:196.8px;" width="11.5" height="6.8" viewBox="0 0 11.5 6.8"><path d="M1 1 L5.75 5.8 L10.5 1" fill="none" stroke="#d6d6d6" stroke-width="1.2"/></svg>
<div class="r" style="left:221px;top:186px;width:1137px;height:26px;background:#262626;border:1px solid #6a6a6a;border-radius:4px;"></div>
<svg class="s" style="left:1342.5px;top:193.8px;" width="12" height="7.2" viewBox="0 0 12 7.2"><path d="M1 1 L6.0 6.2 L11 1" fill="none" stroke="#e6e6e6" stroke-width="1.3"/></svg>
<div class="r" style="left:26px;top:239px;width:1318px;height:435px;background:#ffffff;"></div>
<div class="r" style="left:83px;top:239px;width:1px;height:435px;background:#d9d9d9;"></div>
<div class="r" style="left:156px;top:239px;width:1px;height:435px;background:#d9d9d9;"></div>
<div class="r" style="left:239px;top:239px;width:1px;height:435px;background:#d9d9d9;"></div>
<div class="r" style="left:324px;top:239px;width:1px;height:435px;background:#d9d9d9;"></div>
<div class="r" style="left:389px;top:239px;width:1px;height:435px;background:#d9d9d9;"></div>
<div class="r" style="left:446px;top:239px;width:1px;height:435px;background:#d9d9d9;"></div>
<div class="r" style="left:539px;top:239px;width:1px;height:435px;background:#d9d9d9;"></div>
<div class="r" style="left:653px;top:239px;width:1px;height:435px;background:#d9d9d9;"></div>
<div class="r" style="left:717px;top:239px;width:1px;height:435px;background:#d9d9d9;"></div>
<div class="r" style="left:781px;top:239px;width:1px;height:435px;background:#d9d9d9;"></div>
<div class="r" style="left:845px;top:239px;width:1px;height:435px;background:#d9d9d9;"></div>
<div class="r" style="left:909px;top:239px;width:1px;height:435px;background:#d9d9d9;"></div>
<div class="r" style="left:973px;top:239px;width:1px;height:435px;background:#d9d9d9;"></div>
<div class="r" style="left:1037px;top:239px;width:1px;height:435px;background:#d9d9d9;"></div>
<div class="r" style="left:1101px;top:239px;width:1px;height:435px;background:#d9d9d9;"></div>
<div class="r" style="left:1165px;top:239px;width:1px;height:435px;background:#d9d9d9;"></div>
<div class="r" style="left:1229px;top:239px;width:1px;height:435px;background:#d9d9d9;"></div>
<div class="r" style="left:1293px;top:239px;width:1px;height:435px;background:#d9d9d9;"></div>
<div class="r" style="left:26px;top:258px;width:1318px;height:1px;background:#d9d9d9;"></div>
<div class="r" style="left:26px;top:278px;width:1318px;height:1px;background:#d9d9d9;"></div>
<div class="r" style="left:26px;top:298px;width:1318px;height:1px;background:#d9d9d9;"></div>
<div class="r" style="left:26px;top:318px;width:1318px;height:1px;background:#d9d9d9;"></div>
<div class="r" style="left:26px;top:338px;width:1318px;height:1px;background:#d9d9d9;"></div>
<div class="r" style="left:26px;top:358px;width:1318px;height:1px;background:#d9d9d9;"></div>
<div class="r" style="left:26px;top:378px;width:1318px;height:1px;background:#d9d9d9;"></div>
<div class="r" style="left:26px;top:398px;width:1318px;height:1px;background:#d9d9d9;"></div>
<div class="r" style="left:26px;top:418px;width:1318px;height:1px;background:#d9d9d9;"></div>
<div class="r" style="left:26px;top:438px;width:1318px;height:1px;background:#d9d9d9;"></div>
<div class="r" style="left:26px;top:458px;width:1318px;height:1px;background:#d9d9d9;"></div>
<div class="r" style="left:26px;top:478px;width:1318px;height:1px;background:#d9d9d9;"></div>
<div class="r" style="left:26px;top:498px;width:1318px;height:1px;background:#d9d9d9;"></div>
<div class="r" style="left:26px;top:518px;width:1318px;height:1px;background:#d9d9d9;"></div>
<div class="r" style="left:26px;top:538px;width:1318px;height:1px;background:#d9d9d9;"></div>
<div class="r" style="left:26px;top:558px;width:1318px;height:1px;background:#d9d9d9;"></div>
<div class="r" style="left:26px;top:578px;width:1318px;height:1px;background:#d9d9d9;"></div>
<div class="r" style="left:26px;top:598px;width:1318px;height:1px;background:#d9d9d9;"></div>
<div class="r" style="left:26px;top:618px;width:1318px;height:1px;background:#d9d9d9;"></div>
<div class="r" style="left:26px;top:638px;width:1318px;height:1px;background:#d9d9d9;"></div>
<div class="r" style="left:26px;top:658px;width:1318px;height:1px;background:#d9d9d9;"></div>
<div class="r" style="left:0px;top:219px;width:1344px;height:19px;background:#0a0a0a;"></div>
<div class="r" style="left:1294px;top:219px;width:50px;height:19px;background:#6b6b6b;"></div>
<div class="r" style="left:0px;top:238px;width:1344px;height:1px;background:#7a7a7a;"></div>
<div class="r" style="left:1293px;top:237px;width:51px;height:2px;background:#1a7f37;"></div>
<div class="r" style="left:83px;top:219px;width:1px;height:19px;background:#5f5f5f;"></div>
<div class="r" style="left:156px;top:219px;width:1px;height:19px;background:#5f5f5f;"></div>
<div class="r" style="left:239px;top:219px;width:1px;height:19px;background:#5f5f5f;"></div>
<div class="r" style="left:324px;top:219px;width:1px;height:19px;background:#5f5f5f;"></div>
<div class="r" style="left:389px;top:219px;width:1px;height:19px;background:#5f5f5f;"></div>
<div class="r" style="left:446px;top:219px;width:1px;height:19px;background:#5f5f5f;"></div>
<div class="r" style="left:539px;top:219px;width:1px;height:19px;background:#5f5f5f;"></div>
<div class="r" style="left:653px;top:219px;width:1px;height:19px;background:#5f5f5f;"></div>
<div class="r" style="left:717px;top:219px;width:1px;height:19px;background:#5f5f5f;"></div>
<div class="r" style="left:781px;top:219px;width:1px;height:19px;background:#5f5f5f;"></div>
<div class="r" style="left:845px;top:219px;width:1px;height:19px;background:#5f5f5f;"></div>
<div class="r" style="left:909px;top:219px;width:1px;height:19px;background:#5f5f5f;"></div>
<div class="r" style="left:973px;top:219px;width:1px;height:19px;background:#5f5f5f;"></div>
<div class="r" style="left:1037px;top:219px;width:1px;height:19px;background:#5f5f5f;"></div>
<div class="r" style="left:1101px;top:219px;width:1px;height:19px;background:#5f5f5f;"></div>
<div class="r" style="left:1165px;top:219px;width:1px;height:19px;background:#5f5f5f;"></div>
<div class="r" style="left:1229px;top:219px;width:1px;height:19px;background:#5f5f5f;"></div>
<div class="r" style="left:1293px;top:219px;width:1px;height:19px;background:#5f5f5f;"></div>
<div class="r" style="left:1357px;top:219px;width:1px;height:19px;background:#5f5f5f;"></div>
<div class="r" style="left:25px;top:219px;width:1px;height:19px;background:#5f5f5f;"></div>
<svg class="s" style="left:10px;top:222px;" width="13" height="13" viewBox="0 0 13 13"><path d="M12.5 0.5 V12.5 H0.5 Z" fill="#5a5a5a"/></svg>
<div class="t" style="left:50.50px;top:223.00px;font-size:12px;line-height:12px;color:#e8e8e8;">A</div>
<div class="t" style="left:115.81px;top:223.00px;font-size:12px;line-height:12px;color:#e8e8e8;">B</div>
<div class="t" style="left:193.62px;top:223.00px;font-size:12px;line-height:12px;color:#e8e8e8;">C</div>
<div class="t" style="left:277.44px;top:223.00px;font-size:12px;line-height:12px;color:#e8e8e8;">D</div>
<div class="t" style="left:352.75px;top:223.00px;font-size:12px;line-height:12px;color:#e8e8e8;">E</div>
<div class="t" style="left:414.06px;top:223.00px;font-size:12px;line-height:12px;color:#e8e8e8;">F</div>
<div class="t" style="left:488.44px;top:223.00px;font-size:12px;line-height:12px;color:#e8e8e8;">G</div>
<div class="t" style="left:592.12px;top:223.00px;font-size:12px;line-height:12px;color:#e8e8e8;">H</div>
<div class="t" style="left:683.81px;top:223.00px;font-size:12px;line-height:12px;color:#e8e8e8;">I</div>
<div class="t" style="left:746.81px;top:223.00px;font-size:12px;line-height:12px;color:#e8e8e8;">J</div>
<div class="t" style="left:809.06px;top:223.00px;font-size:12px;line-height:12px;color:#e8e8e8;">K</div>
<div class="t" style="left:873.88px;top:223.00px;font-size:12px;line-height:12px;color:#e8e8e8;">L</div>
<div class="t" style="left:936.50px;top:223.00px;font-size:12px;line-height:12px;color:#e8e8e8;">M</div>
<div class="t" style="left:1001.12px;top:223.00px;font-size:12px;line-height:12px;color:#e8e8e8;">N</div>
<div class="t" style="left:1064.88px;top:223.00px;font-size:12px;line-height:12px;color:#e8e8e8;">O</div>
<div class="t" style="left:1129.31px;top:223.00px;font-size:12px;line-height:12px;color:#e8e8e8;">P</div>
<div class="t" style="left:1192.88px;top:223.00px;font-size:12px;line-height:12px;color:#e8e8e8;">Q</div>
<div class="t" style="left:1256.94px;top:223.00px;font-size:12px;line-height:12px;color:#e8e8e8;">R</div>
<div class="t" style="left:1321.50px;top:223.00px;font-size:12px;line-height:12px;color:#ffffff;">S</div>
<div class="r" style="left:0px;top:239px;width:25px;height:435px;background:#0a0a0a;"></div>
<div class="r" style="left:25px;top:239px;width:1px;height:435px;background:#5f5f5f;"></div>
<div class="r" style="left:0px;top:258px;width:25px;height:1px;background:#5f5f5f;"></div>
<div class="r" style="left:0px;top:278px;width:25px;height:1px;background:#5f5f5f;"></div>
<div class="r" style="left:0px;top:298px;width:25px;height:1px;background:#5f5f5f;"></div>
<div class="r" style="left:0px;top:318px;width:25px;height:1px;background:#5f5f5f;"></div>
<div class="r" style="left:0px;top:338px;width:25px;height:1px;background:#5f5f5f;"></div>
<div class="r" style="left:0px;top:358px;width:25px;height:1px;background:#5f5f5f;"></div>
<div class="r" style="left:0px;top:378px;width:25px;height:1px;background:#5f5f5f;"></div>
<div class="r" style="left:0px;top:398px;width:25px;height:1px;background:#5f5f5f;"></div>
<div class="r" style="left:0px;top:418px;width:25px;height:1px;background:#5f5f5f;"></div>
<div class="r" style="left:0px;top:438px;width:25px;height:1px;background:#5f5f5f;"></div>
<div class="r" style="left:0px;top:458px;width:25px;height:1px;background:#5f5f5f;"></div>
<div class="r" style="left:0px;top:478px;width:25px;height:1px;background:#5f5f5f;"></div>
<div class="r" style="left:0px;top:498px;width:25px;height:1px;background:#5f5f5f;"></div>
<div class="r" style="left:0px;top:518px;width:25px;height:1px;background:#5f5f5f;"></div>
<div class="r" style="left:0px;top:538px;width:25px;height:1px;background:#5f5f5f;"></div>
<div class="r" style="left:0px;top:558px;width:25px;height:1px;background:#5f5f5f;"></div>
<div class="r" style="left:0px;top:578px;width:25px;height:1px;background:#5f5f5f;"></div>
<div class="r" style="left:0px;top:598px;width:25px;height:1px;background:#5f5f5f;"></div>
<div class="r" style="left:0px;top:618px;width:25px;height:1px;background:#5f5f5f;"></div>
<div class="r" style="left:0px;top:638px;width:25px;height:1px;background:#5f5f5f;"></div>
<div class="r" style="left:0px;top:658px;width:25px;height:1px;background:#9a9a9a;"></div>
<div class="r" style="left:0px;top:659px;width:25px;height:15px;background:#6b6b6b;"></div>
<div class="r" style="left:24px;top:659px;width:2px;height:15px;background:#1a7f37;"></div>
<div style="position:absolute;left:0;top:0;width:26px;height:674px;overflow:hidden;">
<div class="t" style="left:9.30px;top:244.00px;font-size:12px;line-height:12px;color:#e8e8e8;">1</div>
<div class="t" style="left:9.43px;top:264.00px;font-size:12px;line-height:12px;color:#e8e8e8;">2</div>
<div class="t" style="left:9.49px;top:284.00px;font-size:12px;line-height:12px;color:#e8e8e8;">3</div>
<div class="t" style="left:9.49px;top:304.00px;font-size:12px;line-height:12px;color:#e8e8e8;">4</div>
<div class="t" style="left:9.49px;top:324.00px;font-size:12px;line-height:12px;color:#e8e8e8;">5</div>
<div class="t" style="left:9.43px;top:344.00px;font-size:12px;line-height:12px;color:#e8e8e8;">6</div>
<div class="t" style="left:9.43px;top:364.00px;font-size:12px;line-height:12px;color:#e8e8e8;">7</div>
<div class="t" style="left:9.49px;top:384.00px;font-size:12px;line-height:12px;color:#e8e8e8;">8</div>
<div class="t" style="left:9.49px;top:404.00px;font-size:12px;line-height:12px;color:#e8e8e8;">9</div>
<div class="t" style="left:5.93px;top:424.00px;font-size:12px;line-height:12px;color:#e8e8e8;">10</div>
<div class="t" style="left:6.43px;top:444.00px;font-size:12px;line-height:12px;color:#e8e8e8;">11</div>
<div class="t" style="left:5.99px;top:464.00px;font-size:12px;line-height:12px;color:#e8e8e8;">12</div>
<div class="t" style="left:5.99px;top:484.00px;font-size:12px;line-height:12px;color:#e8e8e8;">13</div>
<div class="t" style="left:5.86px;top:504.00px;font-size:12px;line-height:12px;color:#e8e8e8;">14</div>
<div class="t" style="left:5.99px;top:524.00px;font-size:12px;line-height:12px;color:#e8e8e8;">15</div>
<div class="t" style="left:5.99px;top:544.00px;font-size:12px;line-height:12px;color:#e8e8e8;">16</div>
<div class="t" style="left:5.99px;top:564.00px;font-size:12px;line-height:12px;color:#e8e8e8;">17</div>
<div class="t" style="left:5.99px;top:584.00px;font-size:12px;line-height:12px;color:#e8e8e8;">18</div>
<div class="t" style="left:5.99px;top:604.00px;font-size:12px;line-height:12px;color:#e8e8e8;">19</div>
<div class="t" style="left:6.05px;top:624.00px;font-size:12px;line-height:12px;color:#e8e8e8;">20</div>
<div class="t" style="left:6.11px;top:644.00px;font-size:12px;line-height:12px;color:#e8e8e8;">21</div>
<div class="t" style="left:6.11px;top:664.00px;font-size:12px;line-height:12px;color:#ffffff;">22</div>
</div>
<div style="position:absolute;left:0;top:0;width:1344px;height:674px;overflow:hidden;">
<div class="t" style="left:28.24px;top:243.00px;font-size:13.5px;line-height:13.5px;color:#000000;transform:scaleX(1.0255);transform-origin:0 0;">order_id</div>
<div class="t" style="left:86.19px;top:243.00px;font-size:13.5px;line-height:13.5px;color:#000000;transform:scaleX(1.0174);transform-origin:0 0;">orderDate</div>
<div class="t" style="left:158.98px;top:243.00px;font-size:13.5px;line-height:13.5px;color:#000000;transform:scaleX(1.0412);transform-origin:0 0;">customer_id</div>
<div class="t" style="left:241.29px;top:243.00px;font-size:13.5px;line-height:13.5px;color:#000000;transform:scaleX(0.9891);transform-origin:0 0;">Resturant_ID</div>
<div class="t" style="left:326.32px;top:243.00px;font-size:13.5px;line-height:13.5px;color:#000000;transform:scaleX(1.0470);transform-origin:0 0;">Fooditem</div>
<div class="t" style="left:392.18px;top:243.00px;font-size:13.5px;line-height:13.5px;color:#000000;transform:scaleX(1.0439);transform-origin:0 0;">quantity</div>
<div class="t" style="left:449.19px;top:243.00px;font-size:13.5px;line-height:13.5px;color:#000000;transform:scaleX(1.0164);transform-origin:0 0;">deliver_status</div>
<div class="t" style="left:541.40px;top:243.00px;font-size:13.5px;line-height:13.5px;color:#000000;transform:scaleX(1.0263);transform-origin:0 0;">payment_method</div>
<div class="t" style="left:39.50px;top:262.00px;font-size:14.5px;line-height:14.5px;color:#000000;transform:scaleX(0.8680);transform-origin:0 0;-webkit-text-stroke:0.25px #000;">256184</div>
<div class="t" style="left:223.80px;top:262.00px;font-size:14.5px;line-height:14.5px;color:#000000;transform:scaleX(0.8680);transform-origin:0 0;-webkit-text-stroke:0.25px #000;">29</div>
<div class="t" style="left:301.50px;top:262.00px;font-size:14.5px;line-height:14.5px;color:#000000;transform:scaleX(0.8680);transform-origin:0 0;-webkit-text-stroke:0.25px #000;">212</div>
<div class="t" style="left:359.50px;top:262.00px;font-size:14.5px;line-height:14.5px;color:#000000;transform:scaleX(0.8680);transform-origin:0 0;-webkit-text-stroke:0.25px #000;">2142</div>
<div class="t" style="left:437.50px;top:262.00px;font-size:14.5px;line-height:14.5px;color:#000000;transform:scaleX(0.8680);transform-origin:0 0;-webkit-text-stroke:0.25px #000;">5</div>
<div class="t" style="left:87.35px;top:262.00px;font-size:14.5px;line-height:14.5px;color:#000000;transform:scaleX(0.8998);transform-origin:0 0;-webkit-text-stroke:0.25px #000;">01-04-2023</div>
<div class="t" style="left:448.56px;top:263.00px;font-size:13.5px;line-height:13.5px;color:#000000;transform:scaleX(1.0127);transform-origin:0 0;">Delivered</div>
<div class="t" style="left:541.74px;top:263.00px;font-size:13.5px;line-height:13.5px;color:#000000;transform:scaleX(0.9009);transform-origin:0 0;">COD</div>
<div class="t" style="left:39.50px;top:282.00px;font-size:14.5px;line-height:14.5px;color:#000000;transform:scaleX(0.8680);transform-origin:0 0;-webkit-text-stroke:0.25px #000;">256185</div>
<div class="t" style="left:223.80px;top:282.00px;font-size:14.5px;line-height:14.5px;color:#000000;transform:scaleX(0.8680);transform-origin:0 0;-webkit-text-stroke:0.25px #000;">24</div>
<div class="t" style="left:301.50px;top:282.00px;font-size:14.5px;line-height:14.5px;color:#000000;transform:scaleX(0.8680);transform-origin:0 0;-webkit-text-stroke:0.25px #000;">213</div>
<div class="t" style="left:359.50px;top:282.00px;font-size:14.5px;line-height:14.5px;color:#000000;transform:scaleX(0.8680);transform-origin:0 0;-webkit-text-stroke:0.25px #000;">2152</div>
<div class="t" style="left:437.50px;top:282.00px;font-size:14.5px;line-height:14.5px;color:#000000;transform:scaleX(0.8680);transform-origin:0 0;-webkit-text-stroke:0.25px #000;">7</div>
<div class="t" style="left:87.35px;top:282.00px;font-size:14.5px;line-height:14.5px;color:#000000;transform:scaleX(0.8998);transform-origin:0 0;-webkit-text-stroke:0.25px #000;">01-04-2023</div>
<div class="t" style="left:448.56px;top:283.00px;font-size:13.5px;line-height:13.5px;color:#000000;transform:scaleX(1.0127);transform-origin:0 0;">Delivered</div>
<div class="t" style="left:541.74px;top:283.00px;font-size:13.5px;line-height:13.5px;color:#000000;transform:scaleX(0.9009);transform-origin:0 0;">COD</div>
<div class="t" style="left:39.50px;top:302.00px;font-size:14.5px;line-height:14.5px;color:#000000;transform:scaleX(0.8680);transform-origin:0 0;-webkit-text-stroke:0.25px #000;">256186</div>
<div class="t" style="left:223.80px;top:302.00px;font-size:14.5px;line-height:14.5px;color:#000000;transform:scaleX(0.8680);transform-origin:0 0;-webkit-text-stroke:0.25px #000;">28</div>
<div class="t" style="left:301.50px;top:302.00px;font-size:14.5px;line-height:14.5px;color:#000000;transform:scaleX(0.8680);transform-origin:0 0;-webkit-text-stroke:0.25px #000;">212</div>
<div class="t" style="left:359.50px;top:302.00px;font-size:14.5px;line-height:14.5px;color:#000000;transform:scaleX(0.8680);transform-origin:0 0;-webkit-text-stroke:0.25px #000;">2145</div>
<div class="t" style="left:437.50px;top:302.00px;font-size:14.5px;line-height:14.5px;color:#000000;transform:scaleX(0.8680);transform-origin:0 0;-webkit-text-stroke:0.25px #000;">2</div>
<div class="t" style="left:87.35px;top:302.00px;font-size:14.5px;line-height:14.5px;color:#000000;transform:scaleX(0.8998);transform-origin:0 0;-webkit-text-stroke:0.25px #000;">01-04-2023</div>
<div class="t" style="left:448.56px;top:303.00px;font-size:13.5px;line-height:13.5px;color:#000000;transform:scaleX(1.0127);transform-origin:0 0;">Delivered</div>
<div class="t" style="left:541.49px;top:303.00px;font-size:13.5px;line-height:13.5px;color:#000000;transform:scaleX(1.0065);transform-origin:0 0;">U</div>
<div class="t" style="left:550.63px;top:303.00px;font-size:13.5px;line-height:13.5px;color:#000000;font-weight:700;transform:scaleX(0.9909);transform-origin:0 0;">PI</div>
<div class="t" style="left:39.50px;top:322.00px;font-size:14.5px;line-height:14.5px;color:#000000;transform:scaleX(0.8680);transform-origin:0 0;-webkit-text-stroke:0.25px #000;">256187</div>
<div class="t" style="left:230.80px;top:322.00px;font-size:14.5px;line-height:14.5px;color:#000000;transform:scaleX(0.8680);transform-origin:0 0;-webkit-text-stroke:0.25px #000;">4</div>
<div class="t" style="left:301.50px;top:322.00px;font-size:14.5px;line-height:14.5px;color:#000000;transform:scaleX(0.8680);transform-origin:0 0;-webkit-text-stroke:0.25px #000;">213</div>
<div class="t" style="left:359.50px;top:322.00px;font-size:14.5px;line-height:14.5px;color:#000000;transform:scaleX(0.8680);transform-origin:0 0;-webkit-text-stroke:0.25px #000;">2149</div>
<div class="t" style="left:437.50px;top:322.00px;font-size:14.5px;line-height:14.5px;color:#000000;transform:scaleX(0.8680);transform-origin:0 0;-webkit-text-stroke:0.25px #000;">2</div>
<div class="t" style="left:87.35px;top:322.00px;font-size:14.5px;line-height:14.5px;color:#000000;transform:scaleX(0.8998);transform-origin:0 0;-webkit-text-stroke:0.25px #000;">01-04-2023</div>
<div class="t" style="left:448.56px;top:323.00px;font-size:13.5px;line-height:13.5px;color:#000000;transform:scaleX(1.0127);transform-origin:0 0;">Delivered</div>
<div class="t" style="left:541.49px;top:323.00px;font-size:13.5px;line-height:13.5px;color:#000000;transform:scaleX(1.0065);transform-origin:0 0;">U</div>
<div class="t" style="left:550.63px;top:323.00px;font-size:13.5px;line-height:13.5px;color:#000000;font-weight:700;transform:scaleX(0.9909);transform-origin:0 0;">PI</div>
<div class="t" style="left:39.50px;top:342.00px;font-size:14.5px;line-height:14.5px;color:#000000;transform:scaleX(0.8680);transform-origin:0 0;-webkit-text-stroke:0.25px #000;">256188</div>
<div class="t" style="left:223.80px;top:342.00px;font-size:14.5px;line-height:14.5px;color:#000000;transform:scaleX(0.8680);transform-origin:0 0;-webkit-text-stroke:0.25px #000;">30</div>
<div class="t" style="left:302.43px;top:342.00px;font-size:14.5px;line-height:14.5px;color:#000000;transform:scaleX(0.8680);transform-origin:0 0;-webkit-text-stroke:0.25px #000;">211</div>
<div class="t" style="left:359.50px;top:342.00px;font-size:14.5px;line-height:14.5px;color:#000000;transform:scaleX(0.8680);transform-origin:0 0;-webkit-text-stroke:0.25px #000;">2141</div>
<div class="t" style="left:437.50px;top:342.00px;font-size:14.5px;line-height:14.5px;color:#000000;transform:scaleX(0.8680);transform-origin:0 0;-webkit-text-stroke:0.25px #000;">4</div>
<div class="t" style="left:87.35px;top:342.00px;font-size:14.5px;line-height:14.5px;color:#000000;transform:scaleX(0.8998);transform-origin:0 0;-webkit-text-stroke:0.25px #000;">01-04-2023</div>
<div class="t" style="left:449.06px;top:343.00px;font-size:13.5px;line-height:13.5px;color:#000000;transform:scaleX(1.0256);transform-origin:0 0;">Cancelled</div>
<div class="t" style="left:541.49px;top:343.00px;font-size:13.5px;line-height:13.5px;color:#000000;transform:scaleX(1.0065);transform-origin:0 0;">U</div>
<div class="t" style="left:550.63px;top:343.00px;font-size:13.5px;line-height:13.5px;color:#000000;font-weight:700;transform:scaleX(0.9909);transform-origin:0 0;">PI</div>
<div class="t" style="left:39.50px;top:362.00px;font-size:14.5px;line-height:14.5px;color:#000000;transform:scaleX(0.8680);transform-origin:0 0;-webkit-text-stroke:0.25px #000;">256189</div>
<div class="t" style="left:223.80px;top:362.00px;font-size:14.5px;line-height:14.5px;color:#000000;transform:scaleX(0.8680);transform-origin:0 0;-webkit-text-stroke:0.25px #000;">17</div>
<div class="t" style="left:301.50px;top:362.00px;font-size:14.5px;line-height:14.5px;color:#000000;transform:scaleX(0.8680);transform-origin:0 0;-webkit-text-stroke:0.25px #000;">212</div>
<div class="t" style="left:359.50px;top:362.00px;font-size:14.5px;line-height:14.5px;color:#000000;transform:scaleX(0.8680);transform-origin:0 0;-webkit-text-stroke:0.25px #000;">2147</div>
<div class="t" style="left:437.50px;top:362.00px;font-size:14.5px;line-height:14.5px;color:#000000;transform:scaleX(0.8680);transform-origin:0 0;-webkit-text-stroke:0.25px #000;">4</div>
<div class="t" style="left:87.35px;top:362.00px;font-size:14.5px;line-height:14.5px;color:#000000;transform:scaleX(0.8998);transform-origin:0 0;-webkit-text-stroke:0.25px #000;">01-04-2023</div>
<div class="t" style="left:448.56px;top:363.00px;font-size:13.5px;line-height:13.5px;color:#000000;transform:scaleX(1.0127);transform-origin:0 0;">Delivered</div>
<div class="t" style="left:541.74px;top:363.00px;font-size:13.5px;line-height:13.5px;color:#000000;transform:scaleX(0.9009);transform-origin:0 0;">COD</div>
<div class="t" style="left:39.50px;top:382.00px;font-size:14.5px;line-height:14.5px;color:#000000;transform:scaleX(0.8680);transform-origin:0 0;-webkit-text-stroke:0.25px #000;">256190</div>
<div class="t" style="left:223.80px;top:382.00px;font-size:14.5px;line-height:14.5px;color:#000000;transform:scaleX(0.8680);transform-origin:0 0;-webkit-text-stroke:0.25px #000;">17</div>
<div class="t" style="left:302.43px;top:382.00px;font-size:14.5px;line-height:14.5px;color:#000000;transform:scaleX(0.8680);transform-origin:0 0;-webkit-text-stroke:0.25px #000;">211</div>
<div class="t" style="left:359.50px;top:382.00px;font-size:14.5px;line-height:14.5px;color:#000000;transform:scaleX(0.8680);transform-origin:0 0;-webkit-text-stroke:0.25px #000;">2142</div>
<div class="t" style="left:437.50px;top:382.00px;font-size:14.5px;line-height:14.5px;color:#000000;transform:scaleX(0.8680);transform-origin:0 0;-webkit-text-stroke:0.25px #000;">4</div>
<div class="t" style="left:87.35px;top:382.00px;font-size:14.5px;line-height:14.5px;color:#000000;transform:scaleX(0.8998);transform-origin:0 0;-webkit-text-stroke:0.25px #000;">01-04-2023</div>
<div class="t" style="left:448.56px;top:383.00px;font-size:13.5px;line-height:13.5px;color:#000000;transform:scaleX(1.0127);transform-origin:0 0;">Delivered</div>
<div class="t" style="left:541.74px;top:383.00px;font-size:13.5px;line-height:13.5px;color:#000000;transform:scaleX(0.9009);transform-origin:0 0;">COD</div>
<div class="t" style="left:39.50px;top:402.00px;font-size:14.5px;line-height:14.5px;color:#000000;transform:scaleX(0.8680);transform-origin:0 0;-webkit-text-stroke:0.25px #000;">256191</div>
<div class="t" style="left:223.80px;top:402.00px;font-size:14.5px;line-height:14.5px;color:#000000;transform:scaleX(0.8680);transform-origin:0 0;-webkit-text-stroke:0.25px #000;">15</div>
<div class="t" style="left:301.50px;top:402.00px;font-size:14.5px;line-height:14.5px;color:#000000;transform:scaleX(0.8680);transform-origin:0 0;-webkit-text-stroke:0.25px #000;">216</div>
<div class="t" style="left:359.50px;top:402.00px;font-size:14.5px;line-height:14.5px;color:#000000;transform:scaleX(0.8680);transform-origin:0 0;-webkit-text-stroke:0.25px #000;">2161</div>
<div class="t" style="left:437.50px;top:402.00px;font-size:14.5px;line-height:14.5px;color:#000000;transform:scaleX(0.8680);transform-origin:0 0;-webkit-text-stroke:0.25px #000;">7</div>
<div class="t" style="left:87.35px;top:402.00px;font-size:14.5px;line-height:14.5px;color:#000000;transform:scaleX(0.8998);transform-origin:0 0;-webkit-text-stroke:0.25px #000;">01-04-2023</div>
<div class="t" style="left:448.56px;top:403.00px;font-size:13.5px;line-height:13.5px;color:#000000;transform:scaleX(1.0127);transform-origin:0 0;">Delivered</div>
<div class="t" style="left:541.49px;top:403.00px;font-size:13.5px;line-height:13.5px;color:#000000;transform:scaleX(1.0065);transform-origin:0 0;">U</div>
<div class="t" style="left:550.63px;top:403.00px;font-size:13.5px;line-height:13.5px;color:#000000;font-weight:700;transform:scaleX(0.9909);transform-origin:0 0;">PI</div>
<div class="t" style="left:39.50px;top:422.00px;font-size:14.5px;line-height:14.5px;color:#000000;transform:scaleX(0.8680);transform-origin:0 0;-webkit-text-stroke:0.25px #000;">256192</div>
<div class="t" style="left:223.80px;top:422.00px;font-size:14.5px;line-height:14.5px;color:#000000;transform:scaleX(0.8680);transform-origin:0 0;-webkit-text-stroke:0.25px #000;">10</div>
<div class="t" style="left:302.43px;top:422.00px;font-size:14.5px;line-height:14.5px;color:#000000;transform:scaleX(0.8680);transform-origin:0 0;-webkit-text-stroke:0.25px #000;">211</div>
<div class="t" style="left:359.50px;top:422.00px;font-size:14.5px;line-height:14.5px;color:#000000;transform:scaleX(0.8680);transform-origin:0 0;-webkit-text-stroke:0.25px #000;">2141</div>
<div class="t" style="left:437.50px;top:422.00px;font-size:14.5px;line-height:14.5px;color:#000000;transform:scaleX(0.8680);transform-origin:0 0;-webkit-text-stroke:0.25px #000;">7</div>
<div class="t" style="left:87.35px;top:422.00px;font-size:14.5px;line-height:14.5px;color:#000000;transform:scaleX(0.8998);transform-origin:0 0;-webkit-text-stroke:0.25px #000;">02-04-2023</div>
<div class="t" style="left:448.56px;top:423.00px;font-size:13.5px;line-height:13.5px;color:#000000;transform:scaleX(1.0127);transform-origin:0 0;">Delivered</div>
<div class="t" style="left:541.74px;top:423.00px;font-size:13.5px;line-height:13.5px;color:#000000;transform:scaleX(0.9009);transform-origin:0 0;">COD</div>
<div class="t" style="left:39.50px;top:442.00px;font-size:14.5px;line-height:14.5px;color:#000000;transform:scaleX(0.8680);transform-origin:0 0;-webkit-text-stroke:0.25px #000;">256193</div>
<div class="t" style="left:223.80px;top:442.00px;font-size:14.5px;line-height:14.5px;color:#000000;transform:scaleX(0.8680);transform-origin:0 0;-webkit-text-stroke:0.25px #000;">29</div>
<div class="t" style="left:301.50px;top:442.00px;font-size:14.5px;line-height:14.5px;color:#000000;transform:scaleX(0.8680);transform-origin:0 0;-webkit-text-stroke:0.25px #000;">212</div>
<div class="t" style="left:359.50px;top:442.00px;font-size:14.5px;line-height:14.5px;color:#000000;transform:scaleX(0.8680);transform-origin:0 0;-webkit-text-stroke:0.25px #000;">2147</div>
<div class="t" style="left:437.50px;top:442.00px;font-size:14.5px;line-height:14.5px;color:#000000;transform:scaleX(0.8680);transform-origin:0 0;-webkit-text-stroke:0.25px #000;">7</div>
<div class="t" style="left:87.35px;top:442.00px;font-size:14.5px;line-height:14.5px;color:#000000;transform:scaleX(0.8998);transform-origin:0 0;-webkit-text-stroke:0.25px #000;">02-04-2023</div>
<div class="t" style="left:448.56px;top:443.00px;font-size:13.5px;line-height:13.5px;color:#000000;transform:scaleX(1.0127);transform-origin:0 0;">Delivered</div>
<div class="t" style="left:541.49px;top:443.00px;font-size:13.5px;line-height:13.5px;color:#000000;transform:scaleX(1.0065);transform-origin:0 0;">U</div>
<div class="t" style="left:550.63px;top:443.00px;font-size:13.5px;line-height:13.5px;color:#000000;font-weight:700;transform:scaleX(0.9909);transform-origin:0 0;">PI</div>
<div class="t" style="left:39.50px;top:462.00px;font-size:14.5px;line-height:14.5px;color:#000000;transform:scaleX(0.8680);transform-origin:0 0;-webkit-text-stroke:0.25px #000;">256194</div>
<div class="t" style="left:223.80px;top:462.00px;font-size:14.5px;line-height:14.5px;color:#000000;transform:scaleX(0.8680);transform-origin:0 0;-webkit-text-stroke:0.25px #000;">25</div>
<div class="t" style="left:301.50px;top:462.00px;font-size:14.5px;line-height:14.5px;color:#000000;transform:scaleX(0.8680);transform-origin:0 0;-webkit-text-stroke:0.25px #000;">213</div>
<div class="t" style="left:359.50px;top:462.00px;font-size:14.5px;line-height:14.5px;color:#000000;transform:scaleX(0.8680);transform-origin:0 0;-webkit-text-stroke:0.25px #000;">2148</div>
<div class="t" style="left:437.50px;top:462.00px;font-size:14.5px;line-height:14.5px;color:#000000;transform:scaleX(0.8680);transform-origin:0 0;-webkit-text-stroke:0.25px #000;">4</div>
<div class="t" style="left:87.35px;top:462.00px;font-size:14.5px;line-height:14.5px;color:#000000;transform:scaleX(0.8998);transform-origin:0 0;-webkit-text-stroke:0.25px #000;">02-04-2023</div>
<div class="t" style="left:448.56px;top:463.00px;font-size:13.5px;line-height:13.5px;color:#000000;transform:scaleX(1.0127);transform-origin:0 0;">Delivered</div>
<div class="t" style="left:541.49px;top:463.00px;font-size:13.5px;line-height:13.5px;color:#000000;transform:scaleX(1.0065);transform-origin:0 0;">U</div>
<div class="t" style="left:550.63px;top:463.00px;font-size:13.5px;line-height:13.5px;color:#000000;font-weight:700;transform:scaleX(0.9909);transform-origin:0 0;">PI</div>
<div class="t" style="left:39.50px;top:482.00px;font-size:14.5px;line-height:14.5px;color:#000000;transform:scaleX(0.8680);transform-origin:0 0;-webkit-text-stroke:0.25px #000;">256195</div>
<div class="t" style="left:230.80px;top:482.00px;font-size:14.5px;line-height:14.5px;color:#000000;transform:scaleX(0.8680);transform-origin:0 0;-webkit-text-stroke:0.25px #000;">3</div>
<div class="t" style="left:301.50px;top:482.00px;font-size:14.5px;line-height:14.5px;color:#000000;transform:scaleX(0.8680);transform-origin:0 0;-webkit-text-stroke:0.25px #000;">212</div>
<div class="t" style="left:359.50px;top:482.00px;font-size:14.5px;line-height:14.5px;color:#000000;transform:scaleX(0.8680);transform-origin:0 0;-webkit-text-stroke:0.25px #000;">2145</div>
<div class="t" style="left:430.50px;top:482.00px;font-size:14.5px;line-height:14.5px;color:#000000;transform:scaleX(0.8680);transform-origin:0 0;-webkit-text-stroke:0.25px #000;">10</div>
<div class="t" style="left:87.35px;top:482.00px;font-size:14.5px;line-height:14.5px;color:#000000;transform:scaleX(0.8998);transform-origin:0 0;-webkit-text-stroke:0.25px #000;">02-04-2023</div>
<div class="t" style="left:448.56px;top:483.00px;font-size:13.5px;line-height:13.5px;color:#000000;transform:scaleX(1.0127);transform-origin:0 0;">Delivered</div>
<div class="t" style="left:541.74px;top:483.00px;font-size:13.5px;line-height:13.5px;color:#000000;transform:scaleX(0.9009);transform-origin:0 0;">COD</div>
<div class="t" style="left:39.50px;top:502.00px;font-size:14.5px;line-height:14.5px;color:#000000;transform:scaleX(0.8680);transform-origin:0 0;-webkit-text-stroke:0.25px #000;">256196</div>
<div class="t" style="left:230.80px;top:502.00px;font-size:14.5px;line-height:14.5px;color:#000000;transform:scaleX(0.8680);transform-origin:0 0;-webkit-text-stroke:0.25px #000;">4</div>
<div class="t" style="left:301.50px;top:502.00px;font-size:14.5px;line-height:14.5px;color:#000000;transform:scaleX(0.8680);transform-origin:0 0;-webkit-text-stroke:0.25px #000;">213</div>
<div class="t" style="left:359.50px;top:502.00px;font-size:14.5px;line-height:14.5px;color:#000000;transform:scaleX(0.8680);transform-origin:0 0;-webkit-text-stroke:0.25px #000;">2150</div>
<div class="t" style="left:437.50px;top:502.00px;font-size:14.5px;line-height:14.5px;color:#000000;transform:scaleX(0.8680);transform-origin:0 0;-webkit-text-stroke:0.25px #000;">5</div>
<div class="t" style="left:87.35px;top:502.00px;font-size:14.5px;line-height:14.5px;color:#000000;transform:scaleX(0.8998);transform-origin:0 0;-webkit-text-stroke:0.25px #000;">02-04-2023</div>
<div class="t" style="left:448.56px;top:503.00px;font-size:13.5px;line-height:13.5px;color:#000000;transform:scaleX(1.0127);transform-origin:0 0;">Delivered</div>
<div class="t" style="left:541.49px;top:503.00px;font-size:13.5px;line-height:13.5px;color:#000000;transform:scaleX(1.0065);transform-origin:0 0;">U</div>
<div class="t" style="left:550.63px;top:503.00px;font-size:13.5px;line-height:13.5px;color:#000000;font-weight:700;transform:scaleX(0.9909);transform-origin:0 0;">PI</div>
<div class="t" style="left:39.50px;top:522.00px;font-size:14.5px;line-height:14.5px;color:#000000;transform:scaleX(0.8680);transform-origin:0 0;-webkit-text-stroke:0.25px #000;">256197</div>
<div class="t" style="left:223.80px;top:522.00px;font-size:14.5px;line-height:14.5px;color:#000000;transform:scaleX(0.8680);transform-origin:0 0;-webkit-text-stroke:0.25px #000;">13</div>
<div class="t" style="left:302.43px;top:522.00px;font-size:14.5px;line-height:14.5px;color:#000000;transform:scaleX(0.8680);transform-origin:0 0;-webkit-text-stroke:0.25px #000;">211</div>
<div class="t" style="left:359.50px;top:522.00px;font-size:14.5px;line-height:14.5px;color:#000000;transform:scaleX(0.8680);transform-origin:0 0;-webkit-text-stroke:0.25px #000;">2144</div>
<div class="t" style="left:437.50px;top:522.00px;font-size:14.5px;line-height:14.5px;color:#000000;transform:scaleX(0.8680);transform-origin:0 0;-webkit-text-stroke:0.25px #000;">1</div>
<div class="t" style="left:87.35px;top:522.00px;font-size:14.5px;line-height:14.5px;color:#000000;transform:scaleX(0.8998);transform-origin:0 0;-webkit-text-stroke:0.25px #000;">02-04-2023</div>
<div class="t" style="left:448.56px;top:523.00px;font-size:13.5px;line-height:13.5px;color:#000000;transform:scaleX(1.0127);transform-origin:0 0;">Delivered</div>
<div class="t" style="left:541.74px;top:523.00px;font-size:13.5px;line-height:13.5px;color:#000000;transform:scaleX(0.9009);transform-origin:0 0;">COD</div>
<div class="t" style="left:39.50px;top:542.00px;font-size:14.5px;line-height:14.5px;color:#000000;transform:scaleX(0.8680);transform-origin:0 0;-webkit-text-stroke:0.25px #000;">256198</div>
<div class="t" style="left:230.80px;top:542.00px;font-size:14.5px;line-height:14.5px;color:#000000;transform:scaleX(0.8680);transform-origin:0 0;-webkit-text-stroke:0.25px #000;">4</div>
<div class="t" style="left:301.50px;top:542.00px;font-size:14.5px;line-height:14.5px;color:#000000;transform:scaleX(0.8680);transform-origin:0 0;-webkit-text-stroke:0.25px #000;">212</div>
<div class="t" style="left:359.50px;top:542.00px;font-size:14.5px;line-height:14.5px;color:#000000;transform:scaleX(0.8680);transform-origin:0 0;-webkit-text-stroke:0.25px #000;">2147</div>
<div class="t" style="left:437.50px;top:542.00px;font-size:14.5px;line-height:14.5px;color:#000000;transform:scaleX(0.8680);transform-origin:0 0;-webkit-text-stroke:0.25px #000;">9</div>
<div class="t" style="left:87.35px;top:542.00px;font-size:14.5px;line-height:14.5px;color:#000000;transform:scaleX(0.8998);transform-origin:0 0;-webkit-text-stroke:0.25px #000;">02-04-2023</div>
<div class="t" style="left:448.56px;top:543.00px;font-size:13.5px;line-height:13.5px;color:#000000;transform:scaleX(1.0127);transform-origin:0 0;">Delivered</div>
<div class="t" style="left:541.49px;top:543.00px;font-size:13.5px;line-height:13.5px;color:#000000;transform:scaleX(1.0065);transform-origin:0 0;">U</div>
<div class="t" style="left:550.63px;top:543.00px;font-size:13.5px;line-height:13.5px;color:#000000;font-weight:700;transform:scaleX(0.9909);transform-origin:0 0;">PI</div>
<div class="t" style="left:39.50px;top:562.00px;font-size:14.5px;line-height:14.5px;color:#000000;transform:scaleX(0.8680);transform-origin:0 0;-webkit-text-stroke:0.25px #000;">256199</div>
<div class="t" style="left:223.80px;top:562.00px;font-size:14.5px;line-height:14.5px;color:#000000;transform:scaleX(0.8680);transform-origin:0 0;-webkit-text-stroke:0.25px #000;">25</div>
<div class="t" style="left:301.50px;top:562.00px;font-size:14.5px;line-height:14.5px;color:#000000;transform:scaleX(0.8680);transform-origin:0 0;-webkit-text-stroke:0.25px #000;">217</div>
<div class="t" style="left:359.50px;top:562.00px;font-size:14.5px;line-height:14.5px;color:#000000;transform:scaleX(0.8680);transform-origin:0 0;-webkit-text-stroke:0.25px #000;">2165</div>
<div class="t" style="left:430.50px;top:562.00px;font-size:14.5px;line-height:14.5px;color:#000000;transform:scaleX(0.8680);transform-origin:0 0;-webkit-text-stroke:0.25px #000;">10</div>
<div class="t" style="left:87.35px;top:562.00px;font-size:14.5px;line-height:14.5px;color:#000000;transform:scaleX(0.8998);transform-origin:0 0;-webkit-text-stroke:0.25px #000;">02-04-2023</div>
<div class="t" style="left:448.56px;top:563.00px;font-size:13.5px;line-height:13.5px;color:#000000;transform:scaleX(1.0127);transform-origin:0 0;">Delivered</div>
<div class="t" style="left:541.49px;top:563.00px;font-size:13.5px;line-height:13.5px;color:#000000;transform:scaleX(1.0065);transform-origin:0 0;">U</div>
<div class="t" style="left:550.63px;top:563.00px;font-size:13.5px;line-height:13.5px;color:#000000;font-weight:700;transform:scaleX(0.9909);transform-origin:0 0;">PI</div>
<div class="t" style="left:39.50px;top:582.00px;font-size:14.5px;line-height:14.5px;color:#000000;transform:scaleX(0.8680);transform-origin:0 0;-webkit-text-stroke:0.25px #000;">256200</div>
<div class="t" style="left:230.80px;top:582.00px;font-size:14.5px;line-height:14.5px;color:#000000;transform:scaleX(0.8680);transform-origin:0 0;-webkit-text-stroke:0.25px #000;">4</div>
<div class="t" style="left:301.50px;top:582.00px;font-size:14.5px;line-height:14.5px;color:#000000;transform:scaleX(0.8680);transform-origin:0 0;-webkit-text-stroke:0.25px #000;">212</div>
<div class="t" style="left:359.50px;top:582.00px;font-size:14.5px;line-height:14.5px;color:#000000;transform:scaleX(0.8680);transform-origin:0 0;-webkit-text-stroke:0.25px #000;">2145</div>
<div class="t" style="left:437.50px;top:582.00px;font-size:14.5px;line-height:14.5px;color:#000000;transform:scaleX(0.8680);transform-origin:0 0;-webkit-text-stroke:0.25px #000;">1</div>
<div class="t" style="left:87.35px;top:582.00px;font-size:14.5px;line-height:14.5px;color:#000000;transform:scaleX(0.8998);transform-origin:0 0;-webkit-text-stroke:0.25px #000;">02-04-2023</div>
<div class="t" style="left:448.56px;top:583.00px;font-size:13.5px;line-height:13.5px;color:#000000;transform:scaleX(1.0127);transform-origin:0 0;">Delivered</div>
<div class="t" style="left:541.49px;top:583.00px;font-size:13.5px;line-height:13.5px;color:#000000;transform:scaleX(1.0065);transform-origin:0 0;">U</div>
<div class="t" style="left:550.63px;top:583.00px;font-size:13.5px;line-height:13.5px;color:#000000;font-weight:700;transform:scaleX(0.9909);transform-origin:0 0;">PI</div>
<div class="t" style="left:39.50px;top:602.00px;font-size:14.5px;line-height:14.5px;color:#000000;transform:scaleX(0.8680);transform-origin:0 0;-webkit-text-stroke:0.25px #000;">256201</div>
<div class="t" style="left:223.80px;top:602.00px;font-size:14.5px;line-height:14.5px;color:#000000;transform:scaleX(0.8680);transform-origin:0 0;-webkit-text-stroke:0.25px #000;">28</div>
<div class="t" style="left:302.43px;top:602.00px;font-size:14.5px;line-height:14.5px;color:#000000;transform:scaleX(0.8680);transform-origin:0 0;-webkit-text-stroke:0.25px #000;">211</div>
<div class="t" style="left:359.50px;top:602.00px;font-size:14.5px;line-height:14.5px;color:#000000;transform:scaleX(0.8680);transform-origin:0 0;-webkit-text-stroke:0.25px #000;">2142</div>
<div class="t" style="left:437.50px;top:602.00px;font-size:14.5px;line-height:14.5px;color:#000000;transform:scaleX(0.8680);transform-origin:0 0;-webkit-text-stroke:0.25px #000;">9</div>
<div class="t" style="left:87.35px;top:602.00px;font-size:14.5px;line-height:14.5px;color:#000000;transform:scaleX(0.8998);transform-origin:0 0;-webkit-text-stroke:0.25px #000;">02-04-2023</div>
<div class="t" style="left:448.56px;top:603.00px;font-size:13.5px;line-height:13.5px;color:#000000;transform:scaleX(1.0127);transform-origin:0 0;">Delivered</div>
<div class="t" style="left:541.49px;top:603.00px;font-size:13.5px;line-height:13.5px;color:#000000;transform:scaleX(1.0065);transform-origin:0 0;">U</div>
<div class="t" style="left:550.63px;top:603.00px;font-size:13.5px;line-height:13.5px;color:#000000;font-weight:700;transform:scaleX(0.9909);transform-origin:0 0;">PI</div>
<div class="t" style="left:39.50px;top:622.00px;font-size:14.5px;line-height:14.5px;color:#000000;transform:scaleX(0.8680);transform-origin:0 0;-webkit-text-stroke:0.25px #000;">256202</div>
<div class="t" style="left:230.80px;top:622.00px;font-size:14.5px;line-height:14.5px;color:#000000;transform:scaleX(0.8680);transform-origin:0 0;-webkit-text-stroke:0.25px #000;">6</div>
<div class="t" style="left:302.43px;top:622.00px;font-size:14.5px;line-height:14.5px;color:#000000;transform:scaleX(0.8680);transform-origin:0 0;-webkit-text-stroke:0.25px #000;">211</div>
<div class="t" style="left:359.50px;top:622.00px;font-size:14.5px;line-height:14.5px;color:#000000;transform:scaleX(0.8680);transform-origin:0 0;-webkit-text-stroke:0.25px #000;">2144</div>
<div class="t" style="left:437.50px;top:622.00px;font-size:14.5px;line-height:14.5px;color:#000000;transform:scaleX(0.8680);transform-origin:0 0;-webkit-text-stroke:0.25px #000;">2</div>
<div class="t" style="left:87.35px;top:622.00px;font-size:14.5px;line-height:14.5px;color:#000000;transform:scaleX(0.8998);transform-origin:0 0;-webkit-text-stroke:0.25px #000;">02-04-2023</div>
<div class="t" style="left:448.56px;top:623.00px;font-size:13.5px;line-height:13.5px;color:#000000;transform:scaleX(1.0127);transform-origin:0 0;">Delivered</div>
<div class="t" style="left:541.74px;top:623.00px;font-size:13.5px;line-height:13.5px;color:#000000;transform:scaleX(0.9009);transform-origin:0 0;">COD</div>
<div class="t" style="left:39.50px;top:642.00px;font-size:14.5px;line-height:14.5px;color:#000000;transform:scaleX(0.8680);transform-origin:0 0;-webkit-text-stroke:0.25px #000;">256203</div>
<div class="t" style="left:230.80px;top:642.00px;font-size:14.5px;line-height:14.5px;color:#000000;transform:scaleX(0.8680);transform-origin:0 0;-webkit-text-stroke:0.25px #000;">9</div>
<div class="t" style="left:301.50px;top:642.00px;font-size:14.5px;line-height:14.5px;color:#000000;transform:scaleX(0.8680);transform-origin:0 0;-webkit-text-stroke:0.25px #000;">212</div>
<div class="t" style="left:359.50px;top:642.00px;font-size:14.5px;line-height:14.5px;color:#000000;transform:scaleX(0.8680);transform-origin:0 0;-webkit-text-stroke:0.25px #000;">2145</div>
<div class="t" style="left:437.50px;top:642.00px;font-size:14.5px;line-height:14.5px;color:#000000;transform:scaleX(0.8680);transform-origin:0 0;-webkit-text-stroke:0.25px #000;">8</div>
<div class="t" style="left:87.35px;top:642.00px;font-size:14.5px;line-height:14.5px;color:#000000;transform:scaleX(0.8998);transform-origin:0 0;-webkit-text-stroke:0.25px #000;">02-04-2023</div>
<div class="t" style="left:448.56px;top:643.00px;font-size:13.5px;line-height:13.5px;color:#000000;transform:scaleX(1.0127);transform-origin:0 0;">Delivered</div>
<div class="t" style="left:541.49px;top:643.00px;font-size:13.5px;line-height:13.5px;color:#000000;transform:scaleX(1.0065);transform-origin:0 0;">U</div>
<div class="t" style="left:550.63px;top:643.00px;font-size:13.5px;line-height:13.5px;color:#000000;font-weight:700;transform:scaleX(0.9909);transform-origin:0 0;">PI</div>
<div class="t" style="left:39.50px;top:662.00px;font-size:14.5px;line-height:14.5px;color:#000000;transform:scaleX(0.8680);transform-origin:0 0;-webkit-text-stroke:0.25px #000;">256204</div>
<div class="t" style="left:223.80px;top:662.00px;font-size:14.5px;line-height:14.5px;color:#000000;transform:scaleX(0.8680);transform-origin:0 0;-webkit-text-stroke:0.25px #000;">26</div>
<div class="t" style="left:301.50px;top:662.00px;font-size:14.5px;line-height:14.5px;color:#000000;transform:scaleX(0.8680);transform-origin:0 0;-webkit-text-stroke:0.25px #000;">212</div>
<div class="t" style="left:359.50px;top:662.00px;font-size:14.5px;line-height:14.5px;color:#000000;transform:scaleX(0.8680);transform-origin:0 0;-webkit-text-stroke:0.25px #000;">2145</div>
<div class="t" style="left:437.50px;top:662.00px;font-size:14.5px;line-height:14.5px;color:#000000;transform:scaleX(0.8680);transform-origin:0 0;-webkit-text-stroke:0.25px #000;">1</div>
<div class="t" style="left:87.35px;top:662.00px;font-size:14.5px;line-height:14.5px;color:#000000;transform:scaleX(0.8998);transform-origin:0 0;-webkit-text-stroke:0.25px #000;">02-04-2023</div>
<div class="t" style="left:448.56px;top:663.00px;font-size:13.5px;line-height:13.5px;color:#000000;transform:scaleX(1.0127);transform-origin:0 0;">Delivered</div>
<div class="t" style="left:541.49px;top:663.00px;font-size:13.5px;line-height:13.5px;color:#000000;transform:scaleX(1.0065);transform-origin:0 0;">U</div>
<div class="t" style="left:550.63px;top:663.00px;font-size:13.5px;line-height:13.5px;color:#000000;font-weight:700;transform:scaleX(0.9909);transform-origin:0 0;">PI</div>
</div>
<div class="r" style="left:1292px;top:657px;width:53px;height:17px;background:none;border:2px solid #187a3e;border-bottom:none;border-right:none;"></div>
<div class="r" style="left:1347px;top:219px;width:17px;height:458px;background:#1c1c1c;border-radius:8px;"></div>
<svg class="s" style="left:1351px;top:224px;" width="9" height="7" viewBox="0 0 9 7"><path d="M4.5 0.5 L8.8 6.5 H0.2 Z" fill="#9a9a9a"/></svg>
<div class="r" style="left:1351px;top:236px;width:9px;height:17px;background:#9b9b9b;border-radius:4.5px;"></div>
<svg class="s" style="left:1351px;top:665px;" width="9" height="7" viewBox="0 0 9 7"><path d="M0.2 0.5 H8.8 L4.5 6.5 Z" fill="#9a9a9a"/></svg>
<div class="r" style="left:116px;top:674px;width:121px;height:28px;background:#ffffff;border-radius:0 0 6px 6px;"></div>
<svg class="s" style="left:108px;top:674px;" width="8" height="8" viewBox="0 0 8 8"><path d="M0 0 H8 V8 C8 3 5 0 0 0 Z" fill="#ffffff"/></svg>
<svg class="s" style="left:237px;top:674px;" width="8" height="8" viewBox="0 0 8 8"><path d="M8 0 H0 V8 C0 3 3 0 8 0 Z" fill="#ffffff"/></svg>
<div class="t" style="left:124.05px;top:680.00px;font-size:13.5px;line-height:13.5px;color:#333333;font-weight:700;transform:scaleX(0.9406);transform-origin:0 0;">April_Sales_2023</div>
<div class="r" style="left:124px;top:696.5px;width:105px;height:2.2px;background:#1a7f37;"></div>
<svg class="s" style="left:27px;top:684px;" width="10" height="11" viewBox="0 0 10 11"><path d="M7.5 0.8 L2.5 5.5 L7.5 10.2" fill="none" stroke="#8a8a8a" stroke-width="1.2"/></svg>
<svg class="s" style="left:60px;top:684px;" width="10" height="11" viewBox="0 0 10 11"><path d="M2.5 0.8 L7.5 5.5 L2.5 10.2" fill="none" stroke="#8a8a8a" stroke-width="1.2"/></svg>
<div class="r" style="left:241px;top:682px;width:1px;height:16px;background:#6a6a6a;"></div>
<svg class="s" style="left:283px;top:683px;" width="13" height="13" viewBox="0 0 13 13"><path d="M6.5 1 V12 M1 6.5 H12" stroke="#e0e0e0" stroke-width="1.2"/></svg>
<div class="r" style="left:821px;top:686px;width:2px;height:2px;background:#ffffff;"></div>
<div class="r" style="left:821px;top:690px;width:2px;height:2px;background:#ffffff;"></div>
<div class="r" style="left:821px;top:694px;width:2px;height:2px;background:#ffffff;"></div>
<div class="r" style="left:838px;top:681px;width:510px;height:17px;background:#1c1c1c;border-radius:8.5px;"></div>
<svg class="s" style="left:843px;top:684px;" width="8" height="10" viewBox="0 0 8 10"><path d="M7.5 0.2 V9.8 L0.5 5 Z" fill="#9a9a9a"/></svg>
<div class="r" style="left:855px;top:684.5px;width:469px;height:10px;background:#9b9b9b;border-radius:5px;"></div>
<svg class="s" style="left:1335px;top:684px;" width="8" height="10" viewBox="0 0 8 10"><path d="M0.5 0.2 V9.8 L7.5 5 Z" fill="#9a9a9a"/></svg>
<div class="r" style="left:0px;top:706px;width:1366px;height:1px;background:#3a3a3a;"></div>
<div class="r" style="left:0px;top:707px;width:1366px;height:20px;background:#151515;"></div>
<div class="t" style="left:10.88px;top:713.00px;font-size:11.5px;line-height:11.5px;color:#ececec;transform:scaleX(0.9359);transform-origin:0 0;">Ready</div>
<svg class="s" style="left:61px;top:709px;" width="16" height="16" viewBox="0 0 16 16"><circle cx="6.5" cy="3" r="2.1" fill="none" stroke="#e6e6e6" stroke-width="1.1"/><path d="M1 2.5 C1.5 5.5 3.5 6.3 4.6 6.3 V11.5 C4.6 13 3.8 14.2 2.8 15 M11.8 2.5 C11.3 5.5 9.5 6.3 8.4 6.3 V10.5" fill="none" stroke="#e6e6e6" stroke-width="1.1"/><path d="M7 12.5 L9.5 15 L15.2 9" fill="none" stroke="#e6e6e6" stroke-width="1.1"/></svg>
<div class="t" style="left:79.40px;top:713.00px;font-size:11.5px;line-height:11.5px;color:#ececec;">Accessibility: Good to go</div>
<div class="r" style="left:1066px;top:707px;width:40px;height:20px;background:#262626;"></div>
<svg class="s" style="left:1079px;top:710px;" width="14" height="14" viewBox="0 0 14 14"><rect x="0.5" y="0.5" width="12.5" height="12.5" fill="none" stroke="#ececec" stroke-width="1"/><path d="M4.7 0.5 V13 M8.8 0.5 V13 M0.5 4.7 H13 M0.5 8.8 H13" stroke="#ececec" stroke-width="1"/></svg>
<svg class="s" style="left:1118px;top:710px;" width="16" height="14" viewBox="0 0 16 14"><rect x="1" y="0.5" width="14" height="12.5" fill="none" stroke="#ececec" stroke-width="1"/><rect x="3.5" y="3" width="9" height="7.5" fill="none" stroke="#ececec" stroke-width="1"/><path d="M5.5 5 H10.5 M5.5 6.8 H10.5 M5.5 8.6 H10.5" stroke="#ececec" stroke-width="0.9"/></svg>
<svg class="s" style="left:1158px;top:710px;" width="16" height="14" viewBox="0 0 16 14"><path d="M1 0.5 H15 V13 H1 Z M1 0.5 V13 M7 0.5 V7 H1 M11 0.5 V4" fill="none" stroke="#ececec" stroke-width="1"/></svg>
<div class="r" style="left:1192px;top:716px;width:8px;height:1.2px;background:#e0e0e0;"></div>
<div class="r" style="left:1205px;top:716px;width:100px;height:1px;background:#a0a0a0;"></div>
<div class="r" style="left:1253px;top:712px;width:5px;height:11px;background:#9a9a9a;"></div>
<svg class="s" style="left:1309px;top:711px;" width="10" height="10" viewBox="0 0 10 10"><path d="M5 0.5 V9.5 M0.5 5 H9.5" stroke="#e0e0e0" stroke-width="1.2"/></svg>
<div class="t" style="left:1330.68px;top:712.00px;font-size:11.5px;line-height:11.5px;color:#ececec;transform:scaleX(0.9381);transform-origin:0 0;">100%</div>
<div class="t" style="left:1073.40px;top:652.00px;font-size:19px;line-height:19px;color:rgba(140,140,140,0.62);transform:scaleX(1.0470);transform-origin:0 0;">Activate Windows</div>
<div class="t" style="left:1072.62px;top:677.00px;font-size:14.5px;line-height:14.5px;color:rgba(205,205,205,0.42);transform:scaleX(1.0371);transform-origin:0 0;">Go to Settings to activate Windows.</div>
</body></html>
